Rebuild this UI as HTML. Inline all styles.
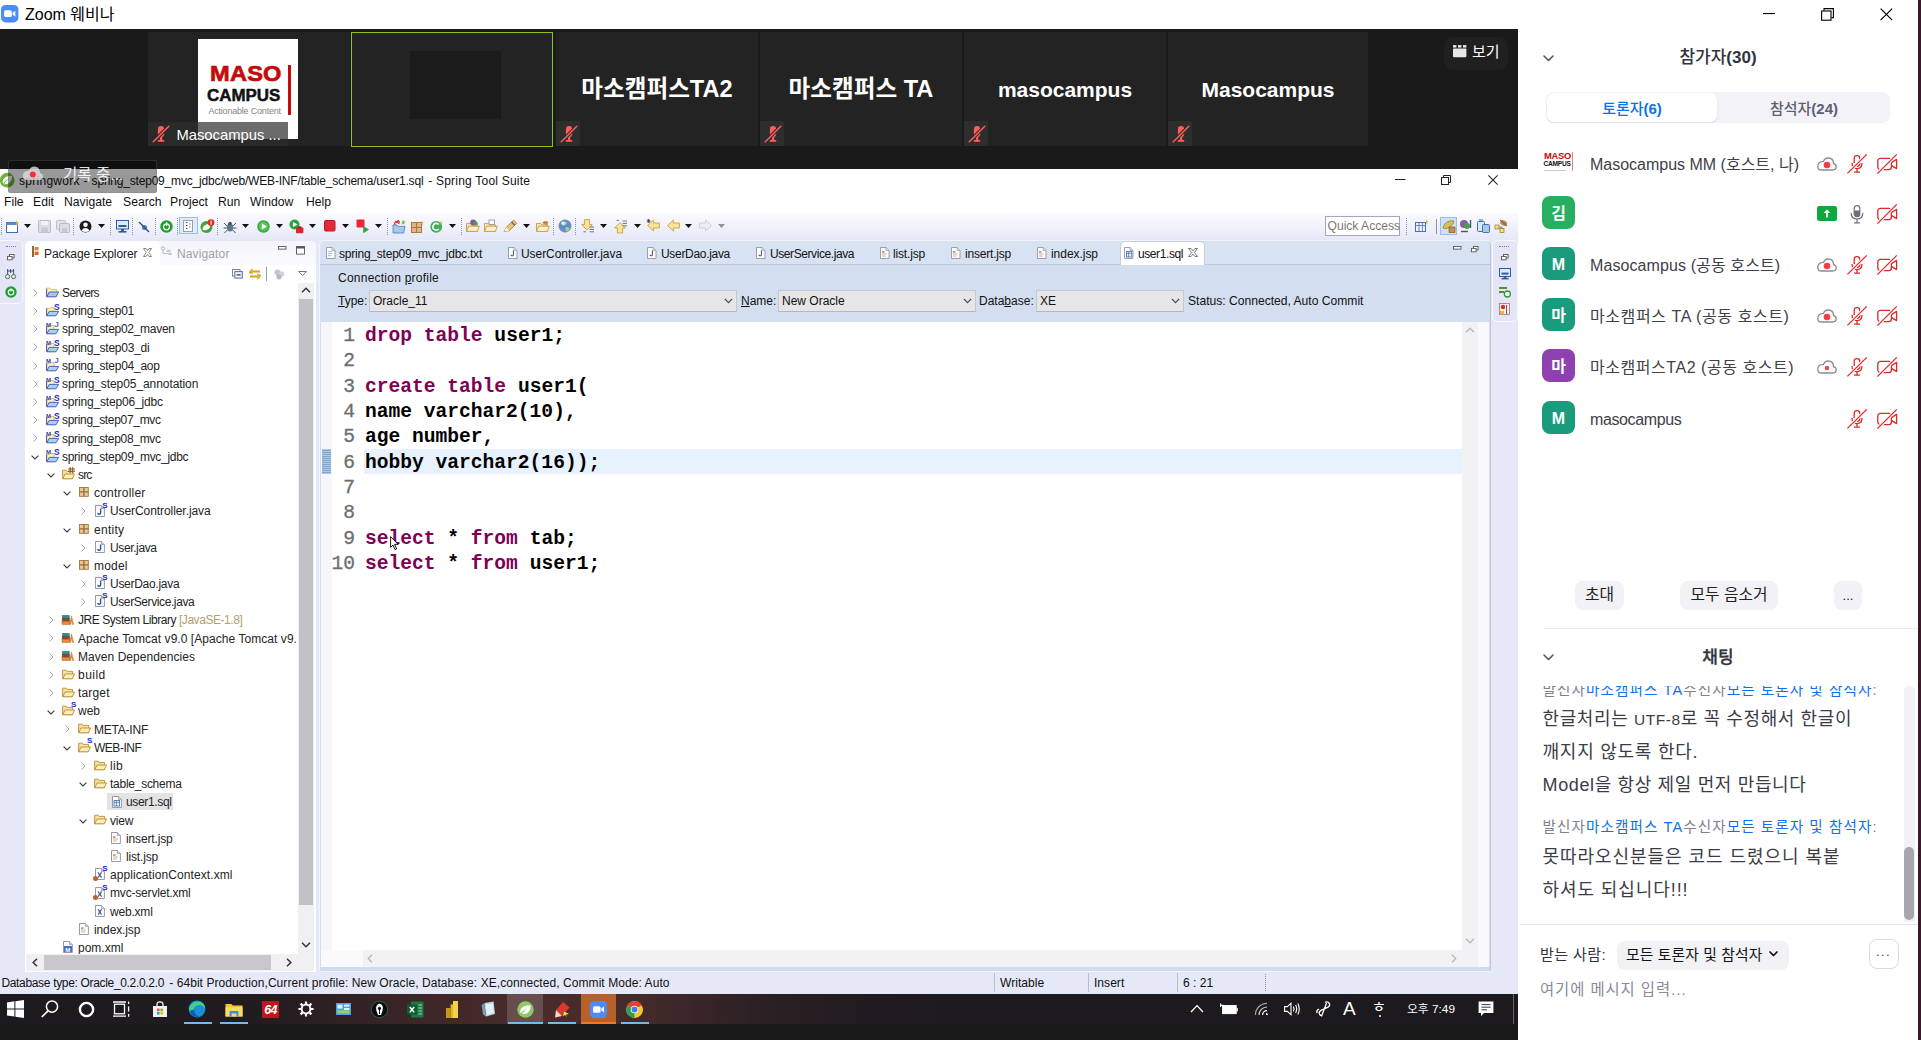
<!DOCTYPE html>
<html lang="ko"><head><meta charset="utf-8"><title>Zoom 웨비나</title>
<style>
*{box-sizing:border-box;margin:0;padding:0}
html,body{width:1921px;height:1040px;overflow:hidden;background:#fff}
body{position:relative;font-family:"Liberation Sans","Noto Sans CJK KR",sans-serif;font-size:12px;color:#000}
.a{position:absolute}
.t{position:absolute;white-space:nowrap;line-height:1}
.kr{font-family:"Liberation Sans","Noto Sans CJK KR",sans-serif}
svg{position:absolute;overflow:visible}
/* zoom */
#zt{left:0;top:0;width:1918px;height:28px;background:#fff}
#dark{left:0;top:29px;width:1518px;height:140px;background:#1a1a1a}
.tile{position:absolute;top:32px;height:114px;background:#232323}
.tname{position:absolute;color:#fff;font-weight:bold;font-size:23.6px;white-space:nowrap;line-height:1;text-align:center;width:100%}
.mute{position:absolute;left:0;top:89px;width:24px;height:25px;background:#2e2e2e}
/* eclipse */
#ecl{left:0;top:169px;width:1518px;height:825px;background:#e5e8f7}
#etitle{left:0;top:169px;width:1518px;height:23px;background:#fff}
#emenu{left:0;top:192px;width:1518px;height:21px;background:#fff}
.mi{position:absolute;top:196.4px;font-size:12.2px;white-space:nowrap;line-height:1;color:#111}
.tr{position:absolute;font-size:12px;white-space:nowrap;line-height:1;color:#242424;letter-spacing:-0.15px}
.code{position:absolute;font-family:"Liberation Mono",monospace;font-weight:bold;font-size:19.6px;white-space:pre;line-height:1;color:#000;left:365px}
.kw{color:#7f0055}
.ln{position:absolute;font-family:"Liberation Mono",monospace;font-size:19.6px;white-space:pre;line-height:1;color:#6e6e6e;-webkit-text-stroke:0.3px #6e6e6e;text-align:right;width:40px;left:315px}
/* right panel */
#rp{left:1518px;top:0;width:400px;height:1040px;background:#fff}
#strip{left:1918px;top:0;width:3px;height:1040px;background:#3a182b}
.pn{position:absolute;left:1590px;font-size:16px;color:#404048;white-space:nowrap;line-height:1}
.av{position:absolute;left:1542px;width:33px;height:33px;border-radius:8px;color:#fff;font-weight:bold;font-size:16px;text-align:center;line-height:35px}
.btn{position:absolute;background:#f1f1f6;border-radius:8px;font-size:15.8px;color:#222;text-align:center;white-space:nowrap}
.ch{position:absolute;left:1542px;white-space:nowrap;line-height:1}
/* taskbar */
#tb{left:0;top:994px;width:1518px;height:30px;background:#1d1a1d}
#tb2{left:0;top:1024px;width:1518px;height:16px;background:#1a1a1a}
</style></head>
<body>
<div class="a" id="zt"></div><div class="a" id="dark"></div><div class="a" id="ecl"></div><div class="a" id="rp"></div><div class="a" id="strip"></div><div class="a" id="tb"></div><div class="a" id="tb2"></div>
<svg style="left:1.2px;top:5.4px" width="17.4" height="17.4" viewBox="0 0 17 17"><rect x="0" y="0" width="17" height="17" rx="4.5" fill="#4a8cff"/><rect x="3" y="5.2" width="7.6" height="6.6" rx="1.6" fill="#fff"/><path d="M11.3 7.6 L14 5.6 V11.4 L11.3 9.4 Z" fill="#fff"/></svg>
<div class="t kr" style="left:25px;top:7px;font-size:16px;color:#000">Zoom 웨비나</div>
<svg style="left:1763px;top:13px" width="13" height="2"><rect width="12" height="1.1" fill="#000"/></svg>
<svg style="left:1821px;top:8px" width="13" height="13" viewBox="0 0 13 13"><path d="M3 2.5 V0.6 H12.4 V9.6 H10.4" fill="none" stroke="#000" stroke-width="1.1"/><rect x="0.6" y="3" width="9.4" height="9.2" fill="none" stroke="#000" stroke-width="1.1"/></svg>
<svg style="left:1880px;top:8px" width="13" height="13" viewBox="0 0 13 13"><path d="M0.6 0.6 L12.2 12.2 M12.2 0.6 L0.6 12.2" stroke="#000" stroke-width="1.2" fill="none"/></svg>
<div class="tile" style="left:148px;width:202px"></div>
<div class="tile" style="left:351px;width:202px;background:#232323;border:1.5px solid #8bc220;height:115px"><div class="a" style="left:58px;top:17.5px;width:91px;height:68px;background:#1b1b1b"></div></div>
<div class="tile" style="left:556px;width:202px"><div class="tname kr" style="top:46px">마소캠퍼스TA2</div><div class="mute"></div></div>
<svg style="left:560px;top:125px" width="18" height="18" viewBox="0 0 18 18"><rect x="5.9" y="1" width="6.3" height="11" rx="3.1" fill="#ff5c5c"/><rect x="7.8" y="12" width="2.4" height="3" fill="#ff5c5c"/><rect x="5.8" y="15" width="6.4" height="1.8" fill="#ff5c5c"/><path d="M1.3 16.7 L16.8 1.3" stroke="#2e2e2e" stroke-width="3.6"/><path d="M1.3 16.7 L16.8 1.3" stroke="#ff5c5c" stroke-width="1.5" stroke-linecap="round"/></svg><div class="tile" style="left:760px;width:202px"><div class="tname kr" style="top:46px">마소캠퍼스 TA</div><div class="mute"></div></div>
<svg style="left:764px;top:125px" width="18" height="18" viewBox="0 0 18 18"><rect x="5.9" y="1" width="6.3" height="11" rx="3.1" fill="#ff5c5c"/><rect x="7.8" y="12" width="2.4" height="3" fill="#ff5c5c"/><rect x="5.8" y="15" width="6.4" height="1.8" fill="#ff5c5c"/><path d="M1.3 16.7 L16.8 1.3" stroke="#2e2e2e" stroke-width="3.6"/><path d="M1.3 16.7 L16.8 1.3" stroke="#ff5c5c" stroke-width="1.5" stroke-linecap="round"/></svg><div class="tile" style="left:964px;width:202px"><div class="tname kr" style="top:46.6px;font-size:21px">masocampus</div><div class="mute"></div></div>
<svg style="left:968px;top:125px" width="18" height="18" viewBox="0 0 18 18"><rect x="5.9" y="1" width="6.3" height="11" rx="3.1" fill="#ff5c5c"/><rect x="7.8" y="12" width="2.4" height="3" fill="#ff5c5c"/><rect x="5.8" y="15" width="6.4" height="1.8" fill="#ff5c5c"/><path d="M1.3 16.7 L16.8 1.3" stroke="#2e2e2e" stroke-width="3.6"/><path d="M1.3 16.7 L16.8 1.3" stroke="#ff5c5c" stroke-width="1.5" stroke-linecap="round"/></svg><div class="tile" style="left:1168px;width:200px"><div class="tname kr" style="top:46.6px;font-size:21px">Masocampus</div><div class="mute"></div></div>
<svg style="left:1172px;top:125px" width="18" height="18" viewBox="0 0 18 18"><rect x="5.9" y="1" width="6.3" height="11" rx="3.1" fill="#ff5c5c"/><rect x="7.8" y="12" width="2.4" height="3" fill="#ff5c5c"/><rect x="5.8" y="15" width="6.4" height="1.8" fill="#ff5c5c"/><path d="M1.3 16.7 L16.8 1.3" stroke="#2e2e2e" stroke-width="3.6"/><path d="M1.3 16.7 L16.8 1.3" stroke="#ff5c5c" stroke-width="1.5" stroke-linecap="round"/></svg><div class="a" style="left:198px;top:39px;width:100px;height:100px;background:#fff"></div>
<div class="t" style="left:209.6px;top:62.6px;font-size:22.6px;font-weight:bold;color:#c40a0a;-webkit-text-stroke:0.7px #c40a0a;letter-spacing:0.2px;transform:scaleX(1.045);transform-origin:0 0">MASO</div>
<div class="t" style="left:207.2px;top:87px;font-size:17.2px;font-weight:bold;color:#111;-webkit-text-stroke:0.5px #111;letter-spacing:0px;transform:scaleX(0.985);transform-origin:0 0">CAMPUS</div>
<div class="t" style="left:208.4px;top:107.2px;font-size:9px;color:#868686;letter-spacing:-0.2px">Actionable Content</div>
<div class="a" style="left:288px;top:65.4px;width:3px;height:50px;background:#c40a0a"></div>
<div class="a" style="left:148px;top:121.5px;width:140px;height:24.5px;background:rgba(45,45,45,0.70)"></div>
<svg style="left:152px;top:125px" width="18" height="18" viewBox="0 0 18 18"><rect x="5.9" y="1" width="6.3" height="11" rx="3.1" fill="#ff5c5c"/><rect x="7.8" y="12" width="2.4" height="3" fill="#ff5c5c"/><rect x="5.8" y="15" width="6.4" height="1.8" fill="#ff5c5c"/><path d="M1.3 16.7 L16.8 1.3" stroke="#2b2b2b" stroke-width="3.6"/><path d="M1.3 16.7 L16.8 1.3" stroke="#ff5c5c" stroke-width="1.5" stroke-linecap="round"/></svg><div class="t" style="left:176.4px;top:128px;font-size:14.8px;color:#fff">Masocampus ...</div>
<div class="a" style="left:1444px;top:37px;width:64px;height:33px;border-radius:9px;background:#202020"></div>
<svg style="left:1453px;top:45.4px" width="13.4" height="12.6" viewBox="0 0 14 13"><rect x="0" y="0" width="3.6" height="2.6" fill="#e8e8e8"/><rect x="5.2" y="0" width="3.6" height="2.6" fill="#e8e8e8"/><rect x="10.4" y="0" width="3.6" height="2.6" fill="#e8e8e8"/><rect x="0" y="3.6" width="14" height="9" rx="0.8" fill="#e8e8e8"/></svg>
<div class="t kr" style="left:1472px;top:43.6px;font-size:15px;color:#fff">보기</div>
<div class="a" id="etitle"></div><div class="a" id="emenu"></div>
<svg style="left:0px;top:171.8px" width="16.4" height="16.4" viewBox="0 0 17 17"><circle cx="7.5" cy="8.5" r="7.6" fill="#6db33f"/><path d="M3.2 12.3 C1.5 8 5 3.6 12.6 3.9 C12.9 9.5 9 13.6 4.2 12.6 C5.6 10.5 7.6 8.4 10.2 6.6 C7 7.7 4.7 9.7 3.2 12.3Z" fill="#fff"/></svg>
<div class="t" style="letter-spacing:0.280px;left:19px;top:175.4px;font-size:12px;color:#111">springwork - </div>
<div class="t" style="letter-spacing:-0.182px;left:91.6px;top:175.4px;font-size:12px;color:#111">spring_step09_mvc_jdbc/web/WEB-INF/table_schema/user1.sql</div>
<div class="t" style="letter-spacing:0.219px;left:428.2px;top:175.4px;font-size:12px;color:#111">- Spring Tool Suite</div>
<svg style="left:1395px;top:179px" width="12" height="2"><rect width="10.5" height="1" fill="#222"/></svg>
<svg style="left:1441px;top:175px" width="10" height="10" viewBox="0 0 10 10"><path d="M2.5 2.5 V0.5 H9.5 V7.5 H7.5" fill="none" stroke="#222" stroke-width="1"/><rect x="0.5" y="2.5" width="7" height="7" fill="none" stroke="#222" stroke-width="1"/></svg>
<svg style="left:1488px;top:175px" width="10" height="10" viewBox="0 0 10 10"><path d="M0.4 0.4 L9.6 9.6 M9.6 0.4 L0.4 9.6" stroke="#222" stroke-width="1.05"/></svg>
<div class="mi" style="left:4px">File</div><div class="mi" style="left:33px">Edit</div><div class="mi" style="left:64px">Navigate</div><div class="mi" style="left:123px">Search</div><div class="mi" style="left:170px">Project</div><div class="mi" style="left:218px">Run</div><div class="mi" style="left:250px">Window</div><div class="mi" style="left:306px">Help</div>
<div class="a" style="left:0;top:213px;width:1518px;height:27px;background:linear-gradient(#fbfbfe,#e5e8f7)"></div>
<div class="a" style="left:1px;top:218px;width:0;height:17px;border-left:1px dotted #9094a8"></div><svg style="left:6px;top:220px" width="13" height="13" viewBox="0 0 13 13"><rect x="0.5" y="2.5" width="11" height="10" fill="#fff" stroke="#3f6fb0"/><rect x="0.5" y="2.5" width="11" height="2.5" fill="#5a8ed0"/><path d="M10 0 L11 2 L13 2.4 L11.3 3.6 L11.8 5.6 L10 4.4 Z" fill="#e8b330"/></svg><svg style="left:23.5px;top:224px" width="7" height="4" viewBox="0 0 7 4"><path d="M0 0 H7 L3.5 4Z" fill="#111"/></svg><svg style="left:38px;top:220px" width="13" height="13" viewBox="0 0 13 13"><rect x="0.5" y="0.5" width="12" height="12" rx="1" fill="#dcdde6" stroke="#b8bac8"/><rect x="3" y="1" width="7" height="4" fill="#f2f2f6"/><rect x="3" y="7.5" width="7" height="5" fill="#c6c8d4"/></svg><svg style="left:56px;top:220px" width="14" height="13" viewBox="0 0 14 13"><rect x="0.5" y="0.5" width="9" height="9" rx="1" fill="#e2e3ea" stroke="#bdbfcc"/><rect x="3.5" y="3.5" width="10" height="9" rx="1" fill="#dcdde6" stroke="#b8bac8"/><rect x="6" y="8" width="5" height="4.5" fill="#c6c8d4"/></svg><div class="a" style="left:73px;top:218px;width:0;height:17px;border-left:1px dotted #9094a8"></div><svg style="left:79px;top:220px" width="13" height="13" viewBox="0 0 13 13"><circle cx="6.5" cy="6.5" r="6" fill="#1c1c1c"/><circle cx="6.5" cy="4.8" r="2.3" fill="#fff"/><path d="M2.4 10.4 Q6.5 5.6 10.6 10.4 Q6.5 13.4 2.4 10.4Z" fill="#fff"/></svg><svg style="left:97.5px;top:224px" width="7" height="4" viewBox="0 0 7 4"><path d="M0 0 H7 L3.5 4Z" fill="#111"/></svg><div class="a" style="left:110px;top:218px;width:0;height:17px;border-left:1px dotted #9094a8"></div><svg style="left:116px;top:220px" width="13" height="13" viewBox="0 0 13 13"><rect x="0.5" y="0.5" width="12" height="8.5" fill="#dbe8f8" stroke="#2f5d9e"/><rect x="2.5" y="5" width="8" height="2" fill="#2f5d9e"/><rect x="5" y="9" width="3" height="2" fill="#2f5d9e"/><rect x="2.5" y="11" width="8" height="1.6" fill="#2f5d9e"/></svg><div class="a" style="left:132px;top:218px;width:0;height:17px;border-left:1px dotted #9094a8"></div><svg style="left:138px;top:221px" width="12" height="12" viewBox="0 0 12 12"><circle cx="6.5" cy="6.5" r="2.6" fill="#5b86c2"/><path d="M1 1 L11 11" stroke="#2c4f86" stroke-width="1.4"/></svg><div class="a" style="left:155px;top:218px;width:0;height:17px;border-left:1px dotted #9094a8"></div><svg style="left:160px;top:220px" width="13" height="13" viewBox="0 0 13 13"><circle cx="6.5" cy="6.5" r="6.2" fill="#1e9e2c"/><circle cx="6.5" cy="6.8" r="3" fill="none" stroke="#fff" stroke-width="1.3"/><rect x="5.9" y="2.3" width="1.3" height="3.6" fill="#fff"/></svg><div class="a" style="left:177px;top:218px;width:0;height:17px;border-left:1px dotted #9094a8"></div><div class="a" style="left:179px;top:217px;width:19px;height:17px;background:#dfeafb;border:1px solid #9cbcec"></div><svg style="left:183px;top:220px" width="11" height="12" viewBox="0 0 11 12"><rect x="0.5" y="0.5" width="9" height="11" fill="#fff" stroke="#9aa0b4"/><path d="M3 2.5 H4.4 M3 5.5 H4.4 M3 8.5 H4.4 M6.3 4 H7.4 M6.3 7 H7.4" stroke="#444" stroke-width="1.1"/></svg><svg style="left:200px;top:219px" width="15" height="15" viewBox="0 0 15 15"><circle cx="6.5" cy="8" r="6" fill="#3fa535"/><path d="M2.6 10.6 C2.5 7 6 4.6 10.6 5.2 C10.4 9.6 7 12 3.4 11 Z" fill="#fff"/><circle cx="11" cy="3.6" r="3.4" fill="#e02a1e"/><rect x="10.5" y="1.6" width="1.1" height="4" fill="#fff"/></svg><div class="a" style="left:217px;top:218px;width:0;height:17px;border-left:1px dotted #9094a8"></div><svg style="left:223px;top:220px" width="14" height="14" viewBox="0 0 14 14"><ellipse cx="7" cy="7.6" rx="3.2" ry="4" fill="#5d7a8c"/><circle cx="7" cy="3.6" r="1.8" fill="#3e5565"/><path d="M1 3 L4 6 M13 3 L10 6 M0.6 8 H3.8 M13.4 8 H10.2 M1.4 13 L4.2 10.2 M12.6 13 L9.8 10.2" stroke="#3e5565" stroke-width="1"/></svg><svg style="left:241.5px;top:224px" width="7" height="4" viewBox="0 0 7 4"><path d="M0 0 H7 L3.5 4Z" fill="#111"/></svg><svg style="left:257px;top:220px" width="13" height="13" viewBox="0 0 13 13"><circle cx="6.5" cy="6.5" r="6.2" fill="#2ea33a"/><circle cx="6.5" cy="6.5" r="5" fill="#57c255"/><path d="M4.8 3.4 L9.8 6.5 L4.8 9.6Z" fill="#fff"/></svg><svg style="left:275.5px;top:224px" width="7" height="4" viewBox="0 0 7 4"><path d="M0 0 H7 L3.5 4Z" fill="#111"/></svg><svg style="left:289px;top:219px" width="15" height="15" viewBox="0 0 15 15"><circle cx="5.5" cy="5.5" r="5" fill="#2ea33a"/><path d="M4 3 L8.4 5.5 L4 8Z" fill="#fff"/><rect x="7" y="8.6" width="7.4" height="5.6" rx="0.8" fill="#d8262c"/><rect x="9" y="7.4" width="3.4" height="1.6" fill="#8e1a1e"/></svg><svg style="left:308.5px;top:224px" width="7" height="4" viewBox="0 0 7 4"><path d="M0 0 H7 L3.5 4Z" fill="#111"/></svg><svg style="left:324px;top:220px" width="12" height="12" viewBox="0 0 12 12"><rect x="0.5" y="0.5" width="10.5" height="10.5" rx="1.2" fill="#e8283a" stroke="#b5142a"/></svg><svg style="left:341.5px;top:224px" width="7" height="4" viewBox="0 0 7 4"><path d="M0 0 H7 L3.5 4Z" fill="#111"/></svg><svg style="left:356px;top:219px" width="14" height="15" viewBox="0 0 14 15"><rect x="0.5" y="0.5" width="8" height="8" rx="1" fill="#e8283a"/><path d="M7.2 7 L13 10.6 L7.2 14.2Z" fill="#2ea33a"/></svg><svg style="left:374.5px;top:224px" width="7" height="4" viewBox="0 0 7 4"><path d="M0 0 H7 L3.5 4Z" fill="#111"/></svg><div class="a" style="left:387px;top:218px;width:0;height:17px;border-left:1px dotted #9094a8"></div><svg style="left:392px;top:219px" width="14" height="15" viewBox="0 0 14 15"><path d="M1 6 H5 L6 7.4 H13 L11.6 14 H1Z" fill="#a6c8ee" stroke="#4b7ab8" stroke-width="0.8"/><path d="M3 6 C2 3 4.6 1 5 4 C5.8 0 8 1.6 6.6 5" fill="none" stroke="#d8262c" stroke-width="1.3"/><path d="M11 0.4 L11.8 2.4 L13.8 2.6 L12.2 3.8 L12.8 5.8 L11 4.6 L9.4 5.8 L9.9 3.8Z" fill="#6bbf3a"/></svg><svg style="left:411px;top:220px" width="13" height="13" viewBox="0 0 13 13"><rect x="0.5" y="2.5" width="10" height="10" fill="#e0b684" stroke="#a87840"/><path d="M5.5 2.5 V12.5 M0.5 7.5 H10.5" stroke="#a87840" stroke-width="1.1"/><path d="M10.4 0 L11.2 2 L13 2.2 L11.6 3.4 L12.2 5.2 L10.4 4.2Z" fill="#e8b330"/></svg><svg style="left:430px;top:220px" width="13" height="13" viewBox="0 0 13 13"><circle cx="6.2" cy="6.8" r="5.9" fill="#3fae56"/><path d="M8.8 4.6 A3.4 3.4 0 1 0 8.8 9" fill="none" stroke="#fff" stroke-width="1.6"/><path d="M10.6 0 L11.3 1.8 L13 2 L11.7 3.1 L12.2 4.8 L10.6 3.9Z" fill="#e8b330"/></svg><svg style="left:448.5px;top:224px" width="7" height="4" viewBox="0 0 7 4"><path d="M0 0 H7 L3.5 4Z" fill="#111"/></svg><div class="a" style="left:461px;top:218px;width:0;height:17px;border-left:1px dotted #9094a8"></div><svg style="left:466px;top:219px" width="14" height="14" viewBox="0 0 14 14"><path d="M0.5 4.4 H4.6 L5.8 5.8 H11.4 V12.4 H0.5Z" fill="#f8e6ae" stroke="#c49c42" stroke-width="0.9"/><path d="M0.5 12.4 L2.6 7.2 H13.4 L11.4 12.4Z" fill="#fdf1c8" stroke="#c49c42" stroke-width="0.9"/><circle cx="7.2" cy="3.4" r="3" fill="#7d5ea0"/><circle cx="9.6" cy="4.4" r="2.1" fill="#4f9a4f"/></svg><svg style="left:484px;top:219px" width="14" height="14" viewBox="0 0 14 14"><path d="M0.5 4.4 H4.6 L5.8 5.8 H11.4 V12.4 H0.5Z" fill="#f8e6ae" stroke="#c49c42" stroke-width="0.9"/><path d="M0.5 12.4 L2.6 7.2 H13.4 L11.4 12.4Z" fill="#fdf1c8" stroke="#c49c42" stroke-width="0.9"/><rect x="5" y="1" width="5.4" height="4.4" fill="#fff" stroke="#8a8fa8" stroke-width="0.8"/></svg><svg style="left:503px;top:219px" width="15" height="14" viewBox="0 0 15 14"><path d="M1 12.6 L3.2 8.4 L10.6 1 L13.8 4.2 L6.4 11.6Z" fill="#e9c27a" stroke="#a97a32" stroke-width="0.8"/><path d="M3.2 8.4 L6.4 11.6 L1 12.6Z" fill="#f8f4ea"/><path d="M8.6 3 L11.8 6.2" stroke="#7a6a52" stroke-width="1.6"/></svg><svg style="left:522.5px;top:224px" width="7" height="4" viewBox="0 0 7 4"><path d="M0 0 H7 L3.5 4Z" fill="#111"/></svg><svg style="left:536px;top:219px" width="14" height="14" viewBox="0 0 14 14"><path d="M0.5 4.4 H4.6 L5.8 5.8 H11.4 V12.4 H0.5Z" fill="#f8e6ae" stroke="#c49c42" stroke-width="0.9"/><path d="M0.5 12.4 L2.6 7.2 H13.4 L11.4 12.4Z" fill="#fdf1c8" stroke="#c49c42" stroke-width="0.9"/><path d="M6 4 Q9 0.6 12.4 3.2 L11 6.4 Z" fill="#c9873a"/></svg><div class="a" style="left:553px;top:218px;width:0;height:17px;border-left:1px dotted #9094a8"></div><svg style="left:558px;top:219px" width="14" height="14" viewBox="0 0 14 14"><circle cx="7" cy="7" r="6.2" fill="#5f8ccf" stroke="#8a93b0" stroke-width="0.6"/><path d="M3 4 Q6 1.4 9 3.4 Q8 6.6 5 6.6 Q3.2 6 3 4Z M7.4 8.4 Q10.6 7.4 11.6 10 Q9.6 12.6 7.6 11.6Z" fill="#a4d890"/><circle cx="5" cy="4.2" r="1.6" fill="#eef4ff" opacity=".85"/></svg><div class="a" style="left:575px;top:218px;width:0;height:17px;border-left:1px dotted #9094a8"></div><svg style="left:581px;top:219px" width="14" height="15" viewBox="0 0 14 15"><path d="M3.4 0.6 H8.6 V5.6 H11.4 L6 11 L0.6 5.6 H3.4Z" fill="#fbe39c" stroke="#c59632" stroke-width="0.8"/><path d="M8.6 8 H13 M8.6 10.4 H13 M8.6 12.8 H13 M2.4 12.8 H5" stroke="#6d7390" stroke-width="1"/></svg><svg style="left:599.5px;top:224px" width="7" height="4" viewBox="0 0 7 4"><path d="M0 0 H7 L3.5 4Z" fill="#111"/></svg><svg style="left:614px;top:219px" width="14" height="15" viewBox="0 0 14 15"><path d="M3.4 14 H8.6 V9 H11.4 L6 3.6 L0.6 9 H3.4Z" fill="#fbe39c" stroke="#c59632" stroke-width="0.8"/><path d="M8.6 2 H13 M8.6 4.4 H13 M8.6 6.8 H13 M2.6 1.4 H5" stroke="#6d7390" stroke-width="1"/></svg><svg style="left:633.5px;top:224px" width="7" height="4" viewBox="0 0 7 4"><path d="M0 0 H7 L3.5 4Z" fill="#111"/></svg><svg style="left:647px;top:219px" width="14" height="14" viewBox="0 0 14 14"><path d="M0.6 6.5 L6.4 1 V4 H12.4 V9 H6.4 V12Z" fill="#fbe39c" stroke="#c59632" stroke-width="0.8"/><path d="M1.6 0 V4 M-0.4 2 H3.6 M0.2 0.6 L3 3.4 M3 0.6 L0.2 3.4" stroke="#333" stroke-width="0.8"/></svg><svg style="left:667px;top:219px" width="14" height="14" viewBox="0 0 14 14"><path d="M0.6 6.5 L6.4 1 V4 H12.4 V9 H6.4 V12Z" fill="#fbe39c" stroke="#c59632" stroke-width="0.8"/></svg><svg style="left:684.5px;top:224px" width="7" height="4" viewBox="0 0 7 4"><path d="M0 0 H7 L3.5 4Z" fill="#111"/></svg><svg style="left:699px;top:219px" width="14" height="14" viewBox="0 0 14 14"><g transform="translate(13,0) scale(-1,1)"><path d="M0.6 6.5 L6.4 1 V4 H12.4 V9 H6.4 V12Z" fill="#eeeef4" stroke="#c3c5d2" stroke-width="0.8"/></g></svg><svg style="left:717.5px;top:224px" width="7" height="4" viewBox="0 0 7 4"><path d="M0 0 H7 L3.5 4Z" fill="#8d8f9c"/></svg><div class="a" style="left:1325px;top:216px;width:75px;height:20px;background:#fff;border:1px solid #a4a7b6"></div><div class="t" style="left:1327.5px;top:220.4px;font-size:12.1px;color:#787878">Quick Access</div><div class="a" style="left:1406px;top:218px;width:0;height:17px;border-left:1px dotted #9094a8"></div><svg style="left:1415px;top:219px" width="14" height="14" viewBox="0 0 14 14"><rect x="0.5" y="3.5" width="10" height="9" fill="#eef3fb" stroke="#4a72b0"/><path d="M0.5 6.5 H10.5 M4 3.5 V12.5 M7.4 3.5 V12.5" stroke="#4a72b0" stroke-width="0.8"/><path d="M11 0 L11.8 2 L13.6 2.2 L12.2 3.4 L12.8 5.4 L11 4.2Z" fill="#e8b330"/></svg><div class="a" style="left:1436px;top:219px;width:1px;height:15px;background:#8e92a6"></div><div class="a" style="left:1440px;top:217px;width:17px;height:18px;background:#cfe0f8;border:1px solid #9cbcec"></div><svg style="left:1442px;top:219px" width="14" height="14" viewBox="0 0 14 14"><path d="M1 9 C2 3 8 1 12 2 C11 6 8 9 3 9.6Z" fill="#d6c24a" stroke="#8c7a1a" stroke-width="0.7"/><rect x="7" y="8" width="6" height="5.6" fill="#c98d4c" stroke="#8a5a22" stroke-width="0.7"/></svg><svg style="left:1459px;top:219px" width="14" height="14" viewBox="0 0 14 14"><circle cx="5" cy="5" r="4" fill="#7d5ea0"/><circle cx="8" cy="7" r="3" fill="#4f9a4f"/><path d="M2 12.5 H9" stroke="#555" stroke-width="1.4"/><path d="M11.5 1 V9" stroke="#3e5a8c" stroke-width="1.4"/></svg><svg style="left:1477px;top:219px" width="14" height="14" viewBox="0 0 14 14"><rect x="0.5" y="2.5" width="7" height="10" rx="1" fill="#dbe8f8" stroke="#3f6fb0"/><rect x="5.5" y="5.5" width="7" height="8" rx="1" fill="#a8c6ee" stroke="#3f6fb0"/><path d="M2 1 H6" stroke="#3f6fb0"/></svg><svg style="left:1494px;top:219px" width="15" height="14" viewBox="0 0 15 14"><rect x="1" y="6" width="4" height="4" fill="#f3e08a" stroke="#8a7a2a" stroke-width="0.7"/><rect x="6" y="9.4" width="4" height="4" fill="#f3e08a" stroke="#8a7a2a" stroke-width="0.7"/><path d="M5 8 H8 V9.4" stroke="#555" fill="none" stroke-width="0.8"/><ellipse cx="9.6" cy="4" rx="3.6" ry="2.6" fill="#b98a4a" transform="rotate(30 9.6 4)"/><path d="M6 1 L13 7" stroke="#6a4a1a" stroke-width="0.9"/></svg>
<div class="a" style="left:-4px;top:240px;width:27px;height:64px;background:#e4e6f8;border:1.5px solid #f8f8fe;border-radius:5px"></div>
<div class="a" style="left:6px;top:246px;width:10px;height:0;border-top:1px dotted #7a7e92"></div>
<svg style="left:7px;top:254px" width="8" height="7" viewBox="0 0 8 7"><rect x="2.5" y="0.5" width="4.6" height="3.4" fill="#fff" stroke="#555" stroke-width="0.9"/><rect x="0.5" y="2.4" width="4.6" height="3.4" fill="#fff" stroke="#555" stroke-width="0.9"/></svg>
<svg style="left:5px;top:268px" width="12" height="12" viewBox="0 0 12 12"><circle cx="2.6" cy="8.6" r="2.1" fill="none" stroke="#4f7d3a" stroke-width="1"/><circle cx="8.6" cy="8.6" r="2.1" fill="none" stroke="#4f7d3a" stroke-width="1"/><path d="M2.6 6.5 V1 M8.6 6.5 V1 M2.6 3 H8.6 M5.6 1 V5" stroke="#3d4f8a" stroke-width="1"/></svg>
<svg style="left:5px;top:286px" width="12" height="12" viewBox="0 0 12 12"><circle cx="6" cy="6" r="5.7" fill="#1e9e2c"/><circle cx="6" cy="6.3" r="2.7" fill="none" stroke="#fff" stroke-width="1.2"/><rect x="5.4" y="2.2" width="1.2" height="3.2" fill="#fff"/></svg>
<div class="a" style="left:25px;top:241px;width:291px;height:731px;background:#fff;border-radius:5px 5px 0 0"></div>
<div class="a" style="left:25px;top:241px;width:291px;height:24px;background:linear-gradient(#f4f5fc,#fbfbff);border-radius:5px 5px 0 0"></div>
<div class="a" style="left:25px;top:241px;width:135px;height:24px;background:#fff;border-radius:5px 5px 0 0"></div>
<svg style="left:32px;top:246px" width="7" height="11" viewBox="0 0 7 11"><rect x="0" y="0" width="2" height="11" fill="#8c6a3c"/><rect x="2.6" y="1" width="4" height="3.4" fill="#c98d4c"/><rect x="2.6" y="5.6" width="4" height="3.4" fill="#d46a2a"/></svg>
<div class="t" style="letter-spacing:-0.082px;left:44px;top:248px;font-size:12px;color:#1c1c1c">Package Explorer</div>
<svg style="left:143px;top:248px" width="9" height="9" viewBox="0 0 9 9"><path d="M0.5 0.5 L3 0.5 L4.5 2.6 L6 0.5 H8.5 L5.8 4.5 L8.5 8.5 H6 L4.5 6.4 L3 8.5 H0.5 L3.2 4.5Z" fill="none" stroke="#777" stroke-width="0.9"/></svg>
<svg style="left:161px;top:246px" width="12" height="11" viewBox="0 0 12 11"><circle cx="2" cy="2.4" r="1.6" fill="none" stroke="#a9adbf" stroke-width="0.9"/><path d="M2 4 V7.6 H5 M5 5 H7 M5 7.6 h3" stroke="#a9adbf" stroke-width="0.9" fill="none"/><rect x="6.6" y="3.8" width="3" height="2.2" fill="#c3c6d4"/><rect x="7.6" y="6.8" width="3" height="2.2" fill="#c3c6d4"/></svg>
<div class="t" style="letter-spacing:0.127px;left:177px;top:248px;font-size:12px;color:#a0a0a6">Navigator</div>
<svg style="left:278px;top:246px" width="9" height="4" viewBox="0 0 9 4"><rect x="0.5" y="0.5" width="7.5" height="2.6" fill="#fff" stroke="#555" stroke-width="0.9"/></svg>
<svg style="left:296px;top:246px" width="9" height="9" viewBox="0 0 9 9"><rect x="0.5" y="0.5" width="8" height="7.6" fill="#fff" stroke="#555" stroke-width="0.9"/><rect x="0.5" y="0.5" width="8" height="2" fill="#555"/></svg>
<svg style="left:232px;top:269px" width="11" height="10" viewBox="0 0 11 10"><rect x="0.5" y="0.5" width="7.5" height="6.5" fill="#fff" stroke="#7b84a6"/><rect x="2.8" y="2.6" width="7.5" height="6.5" fill="#eef2fb" stroke="#5b6aa0"/><path d="M4.6 5.9 H8.6" stroke="#222" stroke-width="1.1"/></svg>
<svg style="left:249px;top:268px" width="12" height="12" viewBox="0 0 12 12"><path d="M11 3.5 H3.6 Q1 3.5 1 5.6" fill="none" stroke="#d9a11c" stroke-width="1.8"/><path d="M3.6 0.6 L0.6 3.5 L3.6 6.4" fill="#e9b82c" stroke="#b5830e" stroke-width="0.6"/><path d="M1 8.5 H8.4 Q11 8.5 11 6.4" fill="none" stroke="#d9a11c" stroke-width="1.8"/><path d="M8.4 5.6 L11.4 8.5 L8.4 11.4" fill="#e9b82c" stroke="#b5830e" stroke-width="0.6"/></svg>
<div class="a" style="left:266px;top:267px;width:1px;height:14px;background:#9a9eb0"></div>
<svg style="left:274px;top:269px" width="12" height="11" viewBox="0 0 12 11"><circle cx="3.4" cy="3.4" r="2.8" fill="#c2c4cf"/><circle cx="7.6" cy="5" r="2.8" fill="#d2d4dc"/><circle cx="5" cy="7.8" r="2.6" fill="#b6b8c6"/></svg>
<svg style="left:298px;top:271px" width="9" height="5" viewBox="0 0 9 5"><path d="M0.6 0.5 H8.4 L4.5 4.4Z" fill="#fff" stroke="#666" stroke-width="0.9"/></svg>
<div class="a" style="left:298px;top:283px;width:16px;height:671px;background:#f0f0f3"></div>
<div class="a" style="left:299px;top:299px;width:14px;height:606px;background:#c2c2c6"></div>
<svg style="left:301px;top:287px" width="10" height="6" viewBox="0 0 10 6"><path d="M1 5.2 L5 1.2 L9 5.2" fill="none" stroke="#333" stroke-width="1.5"/></svg>
<svg style="left:301px;top:942px" width="10" height="6" viewBox="0 0 10 6"><path d="M1 0.8 L5 4.8 L9 0.8" fill="none" stroke="#333" stroke-width="1.5"/></svg>
<div class="a" style="left:26px;top:954px;width:288px;height:17px;background:#f0f0f3"></div>
<div class="a" style="left:44px;top:955px;width:227px;height:15px;background:#c8c8cc"></div>
<svg style="left:32px;top:958px" width="6" height="9" viewBox="0 0 6 9"><path d="M5 0.8 L1.2 4.5 L5 8.2" fill="none" stroke="#333" stroke-width="1.5"/></svg>
<svg style="left:286px;top:958px" width="6" height="9" viewBox="0 0 6 9"><path d="M1 0.8 L4.8 4.5 L1 8.2" fill="none" stroke="#333" stroke-width="1.5"/></svg>
<div class="a" style="left:26px;top:283px;width:272px;height:671px;overflow:hidden"><svg style="left:7.4px;top:5.8px" width="5" height="8" viewBox="0 0 5 8"><path d="M0.6 0.6 L4 4 L0.6 7.4" fill="none" stroke="#a4a4a4" stroke-width="1"/></svg><svg style="left:19.5px;top:3.8000000000000003px" width="13" height="11" viewBox="0 0 13 11"><path d="M0.6 1.2 H4.2 L5.2 2.4 H10.6 V9.6 H0.6Z" fill="#fbf3b4" stroke="#c9b260" stroke-width="0.8"/><path d="M0.6 2 V9.6" stroke="#3a46b0" stroke-width="0.9"/><path d="M0.8 9.8 L3.2 5 H12.6 L10 9.8Z" fill="#a9c6f2" stroke="#3a56b8" stroke-width="0.9"/></svg><div class="tr" style="letter-spacing:-0.621px;left:36px;top:4.0px">Servers</div><svg style="left:7.4px;top:24.0px" width="5" height="8" viewBox="0 0 5 8"><path d="M0.6 0.6 L4 4 L0.6 7.4" fill="none" stroke="#a4a4a4" stroke-width="1"/></svg><svg style="left:19.5px;top:23.0px" width="13" height="11" viewBox="0 0 13 11"><path d="M0.6 2.6 H3.6 L4.4 1.6 H8 V9.6 H0.6Z" fill="#fbf3b4" stroke="#c9b260" stroke-width="0.8"/><path d="M0.6 2.4 V9.6" stroke="#3a46b0" stroke-width="0.9"/><path d="M0.8 9.8 L3.2 5.4 H12.6 L10 9.8Z" fill="#a9d0f4" stroke="#3a56b8" stroke-width="0.9"/></svg><div class="t" style="left:28px;top:19.799999999999997px;font-size:8.4px;font-weight:bold;color:#1f1fd0">S</div><div class="tr" style="letter-spacing:-0.261px;left:36px;top:22.2px">spring_step01</div><svg style="left:7.4px;top:42.2px" width="5" height="8" viewBox="0 0 5 8"><path d="M0.6 0.6 L4 4 L0.6 7.4" fill="none" stroke="#a4a4a4" stroke-width="1"/></svg><svg style="left:19.5px;top:41.2px" width="13" height="11" viewBox="0 0 13 11"><path d="M0.6 2.6 H3.6 L4.4 1.6 H8 V9.6 H0.6Z" fill="#fbf3b4" stroke="#c9b260" stroke-width="0.8"/><path d="M0.6 2.4 V9.6" stroke="#3a46b0" stroke-width="0.9"/><path d="M0.8 9.8 L3.2 5.4 H12.6 L10 9.8Z" fill="#a9d0f4" stroke="#3a56b8" stroke-width="0.9"/></svg><div class="t" style="left:20px;top:39.0px;font-size:6px;font-weight:bold;color:#2a3ab0">M</div><div class="t" style="left:28.4px;top:38.0px;font-size:7.6px;font-weight:bold;color:#4a5ab8">J</div><div class="tr" style="letter-spacing:-0.283px;left:36px;top:40.4px">spring_step02_maven</div><svg style="left:7.4px;top:60.4px" width="5" height="8" viewBox="0 0 5 8"><path d="M0.6 0.6 L4 4 L0.6 7.4" fill="none" stroke="#a4a4a4" stroke-width="1"/></svg><svg style="left:19.5px;top:59.4px" width="13" height="11" viewBox="0 0 13 11"><path d="M0.6 2.6 H3.6 L4.4 1.6 H8 V9.6 H0.6Z" fill="#fbf3b4" stroke="#c9b260" stroke-width="0.8"/><path d="M0.6 2.4 V9.6" stroke="#3a46b0" stroke-width="0.9"/><path d="M0.8 9.8 L3.2 5.4 H12.6 L10 9.8Z" fill="#a9d0f4" stroke="#3a56b8" stroke-width="0.9"/></svg><div class="t" style="left:20px;top:57.199999999999996px;font-size:6px;font-weight:bold;color:#2a3ab0">M</div><div class="t" style="left:28px;top:56.199999999999996px;font-size:8.4px;font-weight:bold;color:#1f1fd0">S</div><div class="tr" style="letter-spacing:-0.257px;left:36px;top:58.6px">spring_step03_di</div><svg style="left:7.4px;top:78.6px" width="5" height="8" viewBox="0 0 5 8"><path d="M0.6 0.6 L4 4 L0.6 7.4" fill="none" stroke="#a4a4a4" stroke-width="1"/></svg><svg style="left:19.5px;top:77.6px" width="13" height="11" viewBox="0 0 13 11"><path d="M0.6 2.6 H3.6 L4.4 1.6 H8 V9.6 H0.6Z" fill="#fbf3b4" stroke="#c9b260" stroke-width="0.8"/><path d="M0.6 2.4 V9.6" stroke="#3a46b0" stroke-width="0.9"/><path d="M0.8 9.8 L3.2 5.4 H12.6 L10 9.8Z" fill="#a9d0f4" stroke="#3a56b8" stroke-width="0.9"/></svg><div class="t" style="left:20px;top:75.4px;font-size:6px;font-weight:bold;color:#2a3ab0">M</div><div class="t" style="left:28.4px;top:74.4px;font-size:7.6px;font-weight:bold;color:#4a5ab8">J</div><div class="tr" style="letter-spacing:-0.259px;left:36px;top:76.8px">spring_step04_aop</div><svg style="left:7.4px;top:96.8px" width="5" height="8" viewBox="0 0 5 8"><path d="M0.6 0.6 L4 4 L0.6 7.4" fill="none" stroke="#a4a4a4" stroke-width="1"/></svg><svg style="left:19.5px;top:95.69999999999999px" width="13" height="11" viewBox="0 0 13 11"><path d="M0.6 2.6 H3.6 L4.4 1.6 H8 V9.6 H0.6Z" fill="#fbf3b4" stroke="#c9b260" stroke-width="0.8"/><path d="M0.6 2.4 V9.6" stroke="#3a46b0" stroke-width="0.9"/><path d="M0.8 9.8 L3.2 5.4 H12.6 L10 9.8Z" fill="#a9d0f4" stroke="#3a56b8" stroke-width="0.9"/></svg><div class="t" style="left:20px;top:93.5px;font-size:6px;font-weight:bold;color:#2a3ab0">M</div><div class="t" style="left:28px;top:92.5px;font-size:8.4px;font-weight:bold;color:#1f1fd0">S</div><div class="tr" style="letter-spacing:-0.076px;left:36px;top:94.9px">spring_step05_annotation</div><svg style="left:7.4px;top:114.9px" width="5" height="8" viewBox="0 0 5 8"><path d="M0.6 0.6 L4 4 L0.6 7.4" fill="none" stroke="#a4a4a4" stroke-width="1"/></svg><svg style="left:19.5px;top:113.89999999999999px" width="13" height="11" viewBox="0 0 13 11"><path d="M0.6 2.6 H3.6 L4.4 1.6 H8 V9.6 H0.6Z" fill="#fbf3b4" stroke="#c9b260" stroke-width="0.8"/><path d="M0.6 2.4 V9.6" stroke="#3a46b0" stroke-width="0.9"/><path d="M0.8 9.8 L3.2 5.4 H12.6 L10 9.8Z" fill="#a9d0f4" stroke="#3a56b8" stroke-width="0.9"/></svg><div class="t" style="left:20px;top:111.7px;font-size:6px;font-weight:bold;color:#2a3ab0">M</div><div class="t" style="left:28px;top:110.7px;font-size:8.4px;font-weight:bold;color:#1f1fd0">S</div><div class="tr" style="letter-spacing:-0.187px;left:36px;top:113.1px">spring_step06_jdbc</div><svg style="left:7.4px;top:133.1px" width="5" height="8" viewBox="0 0 5 8"><path d="M0.6 0.6 L4 4 L0.6 7.4" fill="none" stroke="#a4a4a4" stroke-width="1"/></svg><svg style="left:19.5px;top:132.1px" width="13" height="11" viewBox="0 0 13 11"><path d="M0.6 2.6 H3.6 L4.4 1.6 H8 V9.6 H0.6Z" fill="#fbf3b4" stroke="#c9b260" stroke-width="0.8"/><path d="M0.6 2.4 V9.6" stroke="#3a46b0" stroke-width="0.9"/><path d="M0.8 9.8 L3.2 5.4 H12.6 L10 9.8Z" fill="#a9d0f4" stroke="#3a56b8" stroke-width="0.9"/></svg><div class="t" style="left:20px;top:129.9px;font-size:6px;font-weight:bold;color:#2a3ab0">M</div><div class="t" style="left:28px;top:128.9px;font-size:8.4px;font-weight:bold;color:#1f1fd0">S</div><div class="tr" style="letter-spacing:-0.316px;left:36px;top:131.3px">spring_step07_mvc</div><svg style="left:7.4px;top:151.3px" width="5" height="8" viewBox="0 0 5 8"><path d="M0.6 0.6 L4 4 L0.6 7.4" fill="none" stroke="#a4a4a4" stroke-width="1"/></svg><svg style="left:19.5px;top:150.29999999999998px" width="13" height="11" viewBox="0 0 13 11"><path d="M0.6 2.6 H3.6 L4.4 1.6 H8 V9.6 H0.6Z" fill="#fbf3b4" stroke="#c9b260" stroke-width="0.8"/><path d="M0.6 2.4 V9.6" stroke="#3a46b0" stroke-width="0.9"/><path d="M0.8 9.8 L3.2 5.4 H12.6 L10 9.8Z" fill="#a9d0f4" stroke="#3a56b8" stroke-width="0.9"/></svg><div class="t" style="left:20px;top:148.1px;font-size:6px;font-weight:bold;color:#2a3ab0">M</div><div class="t" style="left:28px;top:147.1px;font-size:8.4px;font-weight:bold;color:#1f1fd0">S</div><div class="tr" style="letter-spacing:-0.316px;left:36px;top:149.5px">spring_step08_mvc</div><svg style="left:5.4px;top:172.0px" width="8" height="5" viewBox="0 0 8 5"><path d="M0.6 0.6 L4 4 L7.4 0.6" fill="none" stroke="#3a3a3a" stroke-width="1.1"/></svg><svg style="left:19.5px;top:168.5px" width="13" height="11" viewBox="0 0 13 11"><path d="M0.6 2.6 H3.6 L4.4 1.6 H8 V9.6 H0.6Z" fill="#fbf3b4" stroke="#c9b260" stroke-width="0.8"/><path d="M0.6 2.4 V9.6" stroke="#3a46b0" stroke-width="0.9"/><path d="M0.8 9.8 L3.2 5.4 H12.6 L10 9.8Z" fill="#a9d0f4" stroke="#3a56b8" stroke-width="0.9"/></svg><div class="t" style="left:20px;top:166.3px;font-size:6px;font-weight:bold;color:#2a3ab0">M</div><div class="t" style="left:28px;top:165.3px;font-size:8.4px;font-weight:bold;color:#1f1fd0">S</div><div class="tr" style="letter-spacing:-0.293px;left:36px;top:167.7px">spring_step09_mvc_jdbc</div><svg style="left:21.4px;top:190.2px" width="8" height="5" viewBox="0 0 8 5"><path d="M0.6 0.6 L4 4 L7.4 0.6" fill="none" stroke="#3a3a3a" stroke-width="1.1"/></svg><svg style="left:35.5px;top:185.7px" width="13" height="11" viewBox="0 0 13 11"><path d="M0.6 1.2 H4.2 L5.2 2.4 H10.6 V9.6 H0.6Z" fill="#f6dfa0" stroke="#b9902e" stroke-width="0.9"/><path d="M0.8 9.8 L3 5 H12.6 L10.2 9.8Z" fill="#fcedbc" stroke="#b9902e" stroke-width="0.9"/></svg><svg style="left:42px;top:184.1px" width="7" height="6" viewBox="0 0 7 6"><path d="M0 2 H7 M0 4.2 H7 M2.2 0 V6 M4.8 0 V6" stroke="#8e4a1a" stroke-width="1"/></svg><div class="tr" style="letter-spacing:-0.832px;left:52px;top:185.9px">src</div><svg style="left:37.4px;top:208.4px" width="8" height="5" viewBox="0 0 8 5"><path d="M0.6 0.6 L4 4 L7.4 0.6" fill="none" stroke="#3a3a3a" stroke-width="1.1"/></svg><svg style="left:53px;top:204.20000000000002px" width="10" height="10" viewBox="0 0 10 10"><rect x="0.5" y="0.5" width="8.8" height="8.8" fill="#e9c79c" stroke="#a8743a" stroke-width="0.9"/><path d="M4.9 0.5 V9.3 M0.5 4.9 H9.3" stroke="#9a6a34" stroke-width="1.3"/></svg><div class="tr" style="letter-spacing:0.224px;left:68px;top:204.1px">controller</div><svg style="left:55.4px;top:224.1px" width="5" height="8" viewBox="0 0 5 8"><path d="M0.6 0.6 L4 4 L0.6 7.4" fill="none" stroke="#a4a4a4" stroke-width="1"/></svg><svg style="left:69.2px;top:221.5px" width="10" height="12" viewBox="0 0 10 12"><path d="M0.5 0.5 H6.4 L9.4 3.4 V11.5 H0.5Z" fill="#fff" stroke="#8a8f9e" stroke-width="0.9"/><path d="M6.4 0.5 V3.4 H9.4" fill="#e8e2c4" stroke="#8a8f9e" stroke-width="0.7"/><path d="M5.6 3.6 V7.6 Q5.6 9.4 3.8 9.2 Q2.8 9 2.8 8" fill="none" stroke="#2a55a8" stroke-width="1.4"/></svg><div class="t" style="left:76.2px;top:218.5px;font-size:8px;font-weight:bold;color:#1f1fd0">S</div><div class="tr" style="letter-spacing:-0.076px;left:84px;top:222.3px">UserController.java</div><svg style="left:37.4px;top:244.8px" width="8" height="5" viewBox="0 0 8 5"><path d="M0.6 0.6 L4 4 L7.4 0.6" fill="none" stroke="#3a3a3a" stroke-width="1.1"/></svg><svg style="left:53px;top:240.6px" width="10" height="10" viewBox="0 0 10 10"><rect x="0.5" y="0.5" width="8.8" height="8.8" fill="#e9c79c" stroke="#a8743a" stroke-width="0.9"/><path d="M4.9 0.5 V9.3 M0.5 4.9 H9.3" stroke="#9a6a34" stroke-width="1.3"/></svg><div class="tr" style="letter-spacing:0.267px;left:68px;top:240.5px">entity</div><svg style="left:55.4px;top:260.5px" width="5" height="8" viewBox="0 0 5 8"><path d="M0.6 0.6 L4 4 L0.6 7.4" fill="none" stroke="#a4a4a4" stroke-width="1"/></svg><svg style="left:69.2px;top:257.9px" width="10" height="12" viewBox="0 0 10 12"><path d="M0.5 0.5 H6.4 L9.4 3.4 V11.5 H0.5Z" fill="#fff" stroke="#8a8f9e" stroke-width="0.9"/><path d="M6.4 0.5 V3.4 H9.4" fill="#e8e2c4" stroke="#8a8f9e" stroke-width="0.7"/><path d="M5.6 3.6 V7.6 Q5.6 9.4 3.8 9.2 Q2.8 9 2.8 8" fill="none" stroke="#2a55a8" stroke-width="1.4"/></svg><div class="tr" style="letter-spacing:-0.380px;left:84px;top:258.7px">User.java</div><svg style="left:37.4px;top:281.1px" width="8" height="5" viewBox="0 0 8 5"><path d="M0.6 0.6 L4 4 L7.4 0.6" fill="none" stroke="#3a3a3a" stroke-width="1.1"/></svg><svg style="left:53px;top:276.9px" width="10" height="10" viewBox="0 0 10 10"><rect x="0.5" y="0.5" width="8.8" height="8.8" fill="#e9c79c" stroke="#a8743a" stroke-width="0.9"/><path d="M4.9 0.5 V9.3 M0.5 4.9 H9.3" stroke="#9a6a34" stroke-width="1.3"/></svg><div class="tr" style="letter-spacing:0.183px;left:68px;top:276.8px">model</div><svg style="left:55.4px;top:296.8px" width="5" height="8" viewBox="0 0 5 8"><path d="M0.6 0.6 L4 4 L0.6 7.4" fill="none" stroke="#a4a4a4" stroke-width="1"/></svg><svg style="left:69.2px;top:294.2px" width="10" height="12" viewBox="0 0 10 12"><path d="M0.5 0.5 H6.4 L9.4 3.4 V11.5 H0.5Z" fill="#fff" stroke="#8a8f9e" stroke-width="0.9"/><path d="M6.4 0.5 V3.4 H9.4" fill="#e8e2c4" stroke="#8a8f9e" stroke-width="0.7"/><path d="M5.6 3.6 V7.6 Q5.6 9.4 3.8 9.2 Q2.8 9 2.8 8" fill="none" stroke="#2a55a8" stroke-width="1.4"/></svg><div class="t" style="left:76.2px;top:291.2px;font-size:8px;font-weight:bold;color:#1f1fd0">S</div><div class="tr" style="letter-spacing:-0.284px;left:84px;top:295.0px">UserDao.java</div><svg style="left:55.4px;top:315.0px" width="5" height="8" viewBox="0 0 5 8"><path d="M0.6 0.6 L4 4 L0.6 7.4" fill="none" stroke="#a4a4a4" stroke-width="1"/></svg><svg style="left:69.2px;top:312.4px" width="10" height="12" viewBox="0 0 10 12"><path d="M0.5 0.5 H6.4 L9.4 3.4 V11.5 H0.5Z" fill="#fff" stroke="#8a8f9e" stroke-width="0.9"/><path d="M6.4 0.5 V3.4 H9.4" fill="#e8e2c4" stroke="#8a8f9e" stroke-width="0.7"/><path d="M5.6 3.6 V7.6 Q5.6 9.4 3.8 9.2 Q2.8 9 2.8 8" fill="none" stroke="#2a55a8" stroke-width="1.4"/></svg><div class="t" style="left:76.2px;top:309.4px;font-size:8px;font-weight:bold;color:#1f1fd0">S</div><div class="tr" style="letter-spacing:-0.401px;left:84px;top:313.2px">UserService.java</div><svg style="left:23.4px;top:333.2px" width="5" height="8" viewBox="0 0 5 8"><path d="M0.6 0.6 L4 4 L0.6 7.4" fill="none" stroke="#a4a4a4" stroke-width="1"/></svg><svg style="left:36px;top:331.6px" width="12" height="10" viewBox="0 0 12 10"><rect x="0.6" y="0.4" width="6.6" height="2.8" fill="#2f8f8c" stroke="#1d5f6a" stroke-width="0.5"/><rect x="0.2" y="3.4" width="7.2" height="2.8" fill="#8a4a30" stroke="#5a2a1a" stroke-width="0.5"/><rect x="0" y="6.4" width="7.8" height="3" fill="#ea8a3c" stroke="#b05a1a" stroke-width="0.5"/><path d="M7.6 9.4 L9.4 0.8 L11.8 9.4 L10.4 9.4 L9.4 5 L8.8 9.4Z" fill="#ea9a3c" stroke="#b06a1a" stroke-width="0.4"/></svg><div class="tr" style="letter-spacing:-0.444px;left:52px;top:331.4px">JRE System Library <span style="color:#b3a06a">[JavaSE-1.8]</span></div><svg style="left:23.4px;top:351.4px" width="5" height="8" viewBox="0 0 5 8"><path d="M0.6 0.6 L4 4 L0.6 7.4" fill="none" stroke="#a4a4a4" stroke-width="1"/></svg><svg style="left:36px;top:349.8px" width="12" height="10" viewBox="0 0 12 10"><rect x="0.6" y="0.4" width="6.6" height="2.8" fill="#2f8f8c" stroke="#1d5f6a" stroke-width="0.5"/><rect x="0.2" y="3.4" width="7.2" height="2.8" fill="#8a4a30" stroke="#5a2a1a" stroke-width="0.5"/><rect x="0" y="6.4" width="7.8" height="3" fill="#ea8a3c" stroke="#b05a1a" stroke-width="0.5"/><path d="M7.6 9.4 L9.4 0.8 L11.8 9.4 L10.4 9.4 L9.4 5 L8.8 9.4Z" fill="#ea9a3c" stroke="#b06a1a" stroke-width="0.4"/></svg><div class="tr" style="letter-spacing:0.054px;left:52px;top:349.6px">Apache Tomcat v9.0 [Apache Tomcat v9.</div><svg style="left:23.4px;top:369.6px" width="5" height="8" viewBox="0 0 5 8"><path d="M0.6 0.6 L4 4 L0.6 7.4" fill="none" stroke="#a4a4a4" stroke-width="1"/></svg><svg style="left:36px;top:368.0px" width="12" height="10" viewBox="0 0 12 10"><rect x="0.6" y="0.4" width="6.6" height="2.8" fill="#2f8f8c" stroke="#1d5f6a" stroke-width="0.5"/><rect x="0.2" y="3.4" width="7.2" height="2.8" fill="#8a4a30" stroke="#5a2a1a" stroke-width="0.5"/><rect x="0" y="6.4" width="7.8" height="3" fill="#ea8a3c" stroke="#b05a1a" stroke-width="0.5"/><path d="M7.6 9.4 L9.4 0.8 L11.8 9.4 L10.4 9.4 L9.4 5 L8.8 9.4Z" fill="#ea9a3c" stroke="#b06a1a" stroke-width="0.4"/></svg><div class="tr" style="letter-spacing:0.051px;left:52px;top:367.8px">Maven Dependencies</div><svg style="left:23.4px;top:387.8px" width="5" height="8" viewBox="0 0 5 8"><path d="M0.6 0.6 L4 4 L0.6 7.4" fill="none" stroke="#a4a4a4" stroke-width="1"/></svg><svg style="left:35.5px;top:385.8px" width="13" height="11" viewBox="0 0 13 11"><path d="M0.6 1.2 H4.2 L5.2 2.4 H10.6 V9.6 H0.6Z" fill="#f6dfa0" stroke="#b9902e" stroke-width="0.9"/><path d="M0.8 9.8 L3 5 H12.6 L10.2 9.8Z" fill="#fcedbc" stroke="#b9902e" stroke-width="0.9"/></svg><div class="tr" style="letter-spacing:0.468px;left:52px;top:386.0px">build</div><svg style="left:23.4px;top:406.0px" width="5" height="8" viewBox="0 0 5 8"><path d="M0.6 0.6 L4 4 L0.6 7.4" fill="none" stroke="#a4a4a4" stroke-width="1"/></svg><svg style="left:35.5px;top:404.0px" width="13" height="11" viewBox="0 0 13 11"><path d="M0.6 1.2 H4.2 L5.2 2.4 H10.6 V9.6 H0.6Z" fill="#f6dfa0" stroke="#b9902e" stroke-width="0.9"/><path d="M0.8 9.8 L3 5 H12.6 L10.2 9.8Z" fill="#fcedbc" stroke="#b9902e" stroke-width="0.9"/></svg><div class="tr" style="letter-spacing:0.167px;left:52px;top:404.2px">target</div><svg style="left:21.4px;top:426.7px" width="8" height="5" viewBox="0 0 8 5"><path d="M0.6 0.6 L4 4 L7.4 0.6" fill="none" stroke="#3a3a3a" stroke-width="1.1"/></svg><svg style="left:35.5px;top:422.20000000000005px" width="13" height="11" viewBox="0 0 13 11"><path d="M0.6 1.2 H4.2 L5.2 2.4 H10.6 V9.6 H0.6Z" fill="#f6dfa0" stroke="#b9902e" stroke-width="0.9"/><path d="M0.8 9.8 L3 5 H12.6 L10.2 9.8Z" fill="#fcedbc" stroke="#b9902e" stroke-width="0.9"/></svg><div class="t" style="left:45px;top:417.6px;font-size:8px;font-weight:bold;color:#1f1fd0">S</div><div class="tr" style="letter-spacing:-0.009px;left:52px;top:422.4px">web</div><svg style="left:39.4px;top:442.4px" width="5" height="8" viewBox="0 0 5 8"><path d="M0.6 0.6 L4 4 L0.6 7.4" fill="none" stroke="#a4a4a4" stroke-width="1"/></svg><svg style="left:51.5px;top:440.40000000000003px" width="13" height="11" viewBox="0 0 13 11"><path d="M0.6 1.2 H4.2 L5.2 2.4 H10.6 V9.6 H0.6Z" fill="#f6dfa0" stroke="#b9902e" stroke-width="0.9"/><path d="M0.8 9.8 L3 5 H12.6 L10.2 9.8Z" fill="#fcedbc" stroke="#b9902e" stroke-width="0.9"/></svg><div class="tr" style="letter-spacing:-0.222px;left:68px;top:440.6px">META-INF</div><svg style="left:37.4px;top:463.1px" width="8" height="5" viewBox="0 0 8 5"><path d="M0.6 0.6 L4 4 L7.4 0.6" fill="none" stroke="#3a3a3a" stroke-width="1.1"/></svg><svg style="left:51.5px;top:458.6px" width="13" height="11" viewBox="0 0 13 11"><path d="M0.6 1.2 H4.2 L5.2 2.4 H10.6 V9.6 H0.6Z" fill="#f6dfa0" stroke="#b9902e" stroke-width="0.9"/><path d="M0.8 9.8 L3 5 H12.6 L10.2 9.8Z" fill="#fcedbc" stroke="#b9902e" stroke-width="0.9"/></svg><div class="t" style="left:61px;top:454.0px;font-size:8px;font-weight:bold;color:#1f1fd0">S</div><div class="tr" style="letter-spacing:-0.482px;left:68px;top:458.8px">WEB-INF</div><svg style="left:55.4px;top:478.7px" width="5" height="8" viewBox="0 0 5 8"><path d="M0.6 0.6 L4 4 L0.6 7.4" fill="none" stroke="#a4a4a4" stroke-width="1"/></svg><svg style="left:67.5px;top:476.70000000000005px" width="13" height="11" viewBox="0 0 13 11"><path d="M0.6 1.2 H4.2 L5.2 2.4 H10.6 V9.6 H0.6Z" fill="#f6dfa0" stroke="#b9902e" stroke-width="0.9"/><path d="M0.8 9.8 L3 5 H12.6 L10.2 9.8Z" fill="#fcedbc" stroke="#b9902e" stroke-width="0.9"/></svg><div class="tr" style="letter-spacing:0.329px;left:84px;top:476.9px">lib</div><svg style="left:53.4px;top:499.4px" width="8" height="5" viewBox="0 0 8 5"><path d="M0.6 0.6 L4 4 L7.4 0.6" fill="none" stroke="#3a3a3a" stroke-width="1.1"/></svg><svg style="left:67.5px;top:494.90000000000003px" width="13" height="11" viewBox="0 0 13 11"><path d="M0.6 1.2 H4.2 L5.2 2.4 H10.6 V9.6 H0.6Z" fill="#f6dfa0" stroke="#b9902e" stroke-width="0.9"/><path d="M0.8 9.8 L3 5 H12.6 L10.2 9.8Z" fill="#fcedbc" stroke="#b9902e" stroke-width="0.9"/></svg><div class="tr" style="letter-spacing:-0.260px;left:84px;top:495.1px">table_schema</div><svg style="left:85.2px;top:512.5px" width="10" height="12" viewBox="0 0 10 12"><path d="M0.5 0.5 H6.4 L9.4 3.4 V11.5 H0.5Z" fill="#fff" stroke="#8a8f9e" stroke-width="0.9"/><path d="M6.4 0.5 V3.4 H9.4" fill="#e8e2c4" stroke="#8a8f9e" stroke-width="0.7"/><rect x="2" y="4.4" width="5.6" height="5.6" fill="#eaf0fa" stroke="#3f6fa8" stroke-width="0.8"/><path d="M2 6.4 H7.6 M4.4 4.4 V10" stroke="#3f6fa8" stroke-width="0.7"/></svg><div class="a" style="left:81px;top:510.0px;width:66px;height:17px;background:#e3e3e6"></div><svg style="left:86px;top:512.5px" width="10" height="12" viewBox="0 0 10 12"><path d="M0.5 0.5 H6.4 L9.4 3.4 V11.5 H0.5Z" fill="#fff" stroke="#8a8f9e" stroke-width="0.9"/><path d="M6.4 0.5 V3.4 H9.4" fill="#e8e2c4" stroke="#8a8f9e" stroke-width="0.7"/><rect x="2" y="4.4" width="5.6" height="5.6" fill="#eaf0fa" stroke="#3f6fa8" stroke-width="0.8"/><path d="M2 6.4 H7.6 M4.4 4.4 V10" stroke="#3f6fa8" stroke-width="0.7"/></svg><div class="tr" style="letter-spacing:-0.344px;left:100px;top:513.3px">user1.sql</div><svg style="left:53.4px;top:535.8px" width="8" height="5" viewBox="0 0 8 5"><path d="M0.6 0.6 L4 4 L7.4 0.6" fill="none" stroke="#3a3a3a" stroke-width="1.1"/></svg><svg style="left:67.5px;top:531.3000000000001px" width="13" height="11" viewBox="0 0 13 11"><path d="M0.6 1.2 H4.2 L5.2 2.4 H10.6 V9.6 H0.6Z" fill="#f6dfa0" stroke="#b9902e" stroke-width="0.9"/><path d="M0.8 9.8 L3 5 H12.6 L10.2 9.8Z" fill="#fcedbc" stroke="#b9902e" stroke-width="0.9"/></svg><div class="tr" style="letter-spacing:-0.177px;left:84px;top:531.5px">view</div><svg style="left:85.2px;top:548.9px" width="10" height="12" viewBox="0 0 10 12"><path d="M0.5 0.5 H6.4 L9.4 3.4 V11.5 H0.5Z" fill="#fff" stroke="#8a8f9e" stroke-width="0.9"/><path d="M6.4 0.5 V3.4 H9.4" fill="#e8e2c4" stroke="#8a8f9e" stroke-width="0.7"/><path d="M2 5 H5 M2 7 H7 M2 9 H6" stroke="#b0a27a" stroke-width="0.8"/><rect x="2" y="4.6" width="2" height="1" fill="#d05a4a"/></svg><div class="tr" style="letter-spacing:-0.143px;left:100px;top:549.7px">insert.jsp</div><svg style="left:85.2px;top:567.1px" width="10" height="12" viewBox="0 0 10 12"><path d="M0.5 0.5 H6.4 L9.4 3.4 V11.5 H0.5Z" fill="#fff" stroke="#8a8f9e" stroke-width="0.9"/><path d="M6.4 0.5 V3.4 H9.4" fill="#e8e2c4" stroke="#8a8f9e" stroke-width="0.7"/><path d="M2 5 H5 M2 7 H7 M2 9 H6" stroke="#b0a27a" stroke-width="0.8"/><rect x="2" y="4.6" width="2" height="1" fill="#d05a4a"/></svg><div class="tr" style="letter-spacing:-0.168px;left:100px;top:567.9px">list.jsp</div><svg style="left:69.2px;top:585.3px" width="10" height="12" viewBox="0 0 10 12"><path d="M0.5 0.5 H6.4 L9.4 3.4 V11.5 H0.5Z" fill="#fff" stroke="#8a8f9e" stroke-width="0.9"/><path d="M6.4 0.5 V3.4 H9.4" fill="#e8e2c4" stroke="#8a8f9e" stroke-width="0.7"/><path d="M3 4.4 L6.6 9.6 M6.6 4.4 L3 9.6" stroke="#3a5a9a" stroke-width="1.1"/></svg><div class="t" style="left:76.2px;top:582.3px;font-size:8px;font-weight:bold;color:#1f1fd0">S</div><div class="a" style="left:67.2px;top:593.3px;width:5px;height:5px;border-radius:3px;background:#c0602a"></div><div class="tr" style="letter-spacing:0.085px;left:84px;top:586.1px">applicationContext.xml</div><svg style="left:69.2px;top:603.5px" width="10" height="12" viewBox="0 0 10 12"><path d="M0.5 0.5 H6.4 L9.4 3.4 V11.5 H0.5Z" fill="#fff" stroke="#8a8f9e" stroke-width="0.9"/><path d="M6.4 0.5 V3.4 H9.4" fill="#e8e2c4" stroke="#8a8f9e" stroke-width="0.7"/><path d="M3 4.4 L6.6 9.6 M6.6 4.4 L3 9.6" stroke="#3a5a9a" stroke-width="1.1"/></svg><div class="t" style="left:76.2px;top:600.5px;font-size:8px;font-weight:bold;color:#1f1fd0">S</div><div class="a" style="left:67.2px;top:611.5px;width:5px;height:5px;border-radius:3px;background:#c0602a"></div><div class="tr" style="letter-spacing:-0.183px;left:84px;top:604.3px">mvc-servlet.xml</div><svg style="left:69.2px;top:621.7px" width="10" height="12" viewBox="0 0 10 12"><path d="M0.5 0.5 H6.4 L9.4 3.4 V11.5 H0.5Z" fill="#fff" stroke="#8a8f9e" stroke-width="0.9"/><path d="M6.4 0.5 V3.4 H9.4" fill="#e8e2c4" stroke="#8a8f9e" stroke-width="0.7"/><path d="M3 4.4 L6.6 9.6 M6.6 4.4 L3 9.6" stroke="#3a5a9a" stroke-width="1.1"/></svg><div class="tr" style="letter-spacing:-0.203px;left:84px;top:622.5px">web.xml</div><svg style="left:53.2px;top:639.9px" width="10" height="12" viewBox="0 0 10 12"><path d="M0.5 0.5 H6.4 L9.4 3.4 V11.5 H0.5Z" fill="#fff" stroke="#8a8f9e" stroke-width="0.9"/><path d="M6.4 0.5 V3.4 H9.4" fill="#e8e2c4" stroke="#8a8f9e" stroke-width="0.7"/><path d="M2 5 H5 M2 7 H7 M2 9 H6" stroke="#b0a27a" stroke-width="0.8"/><rect x="2" y="4.6" width="2" height="1" fill="#d05a4a"/></svg><div class="tr" style="letter-spacing:-0.118px;left:68px;top:640.7px">index.jsp</div><svg style="left:37.2px;top:658.0px" width="10" height="12" viewBox="0 0 10 12"><path d="M0.5 0.5 H6.4 L9.4 3.4 V11.5 H0.5Z" fill="#fff" stroke="#8a8f9e" stroke-width="0.9"/><path d="M6.4 0.5 V3.4 H9.4" fill="#e8e2c4" stroke="#8a8f9e" stroke-width="0.7"/></svg><div class="a" style="left:38.2px;top:663.0px;width:8px;height:6px;background:#3f6fc8"></div><div class="t" style="left:39.2px;top:663.5px;font-size:6px;font-weight:bold;color:#fff">M</div><div class="tr" style="letter-spacing:-0.007px;left:52px;top:658.8px">pom.xml</div></div>
<div class="a" style="left:319px;top:240px;width:1172px;height:732px;background:#d3dff0;border-radius:6px 6px 4px 4px;border:1px solid #f3f5fd;border-right-color:#c2c3cc"></div>
<div class="a" style="left:320px;top:241px;width:1170px;height:24px;background:#d7e2f2;border-radius:5px 5px 0 0"></div>
<div class="a" style="left:320px;top:264px;width:1170px;height:1px;background:#b9c6dc"></div>
<div class="a" style="left:321px;top:265px;width:1168px;height:57px;background:#d3dff0"></div>
<div class="a" style="left:321px;top:322px;width:1168px;height:645px;background:#fff"></div>
<div class="a" style="left:321px;top:322px;width:11px;height:628px;background:#f7f7fa"></div>
<div class="a" style="left:1462px;top:322px;width:16px;height:645px;background:#f2f1f4"></div>
<div class="a" style="left:1478px;top:322px;width:11px;height:645px;background:#f9f8fb"></div>
<div class="a" style="left:363px;top:950px;width:1099px;height:17px;background:#f2f1f4"></div>
<div class="a" style="left:321px;top:950px;width:42px;height:17px;background:#fafafc"></div>
<div class="a" style="left:320px;top:967px;width:1170px;height:4px;background:#cfdcee"></div>
<div class="a" style="left:1120px;top:241px;width:85px;height:24px;background:#fff;border-radius:5px 5px 0 0;border:1px solid #c3cde0;border-bottom:none"></div>
<svg style="left:326px;top:247px" width="10" height="12" viewBox="0 0 10 12"><path d="M0.5 0.5 H6 L9 3.4 V11.5 H0.5Z" fill="#fdfdfd" stroke="#8f95a8" stroke-width="0.9"/><path d="M6 0.5 V3.4 H9" fill="#e8e2c4" stroke="#8f95a8" stroke-width="0.7"/><path d="M2 4.6 H6.4 M2 6.6 H6.4 M2 8.6 H5.4" stroke="#a4a8b8" stroke-width="0.8"/></svg><div class="t" style="letter-spacing:-0.221px;left:339px;top:248px;font-size:12px;color:#111">spring_step09_mvc_jdbc.txt</div><svg style="left:508px;top:247px" width="10" height="12" viewBox="0 0 10 12"><path d="M0.5 0.5 H6 L9 3.4 V11.5 H0.5Z" fill="#fdfdfd" stroke="#8f95a8" stroke-width="0.9"/><path d="M6 0.5 V3.4 H9" fill="#e8e2c4" stroke="#8f95a8" stroke-width="0.7"/><path d="M5.4 3.6 V7.4 Q5.4 9 3.8 8.8 Q3 8.6 3 7.8" fill="none" stroke="#4a5a7a" stroke-width="1.1"/></svg><div class="t" style="letter-spacing:-0.055px;left:521px;top:248px;font-size:12px;color:#111">UserController.java</div><svg style="left:647px;top:247px" width="10" height="12" viewBox="0 0 10 12"><path d="M0.5 0.5 H6 L9 3.4 V11.5 H0.5Z" fill="#fdfdfd" stroke="#8f95a8" stroke-width="0.9"/><path d="M6 0.5 V3.4 H9" fill="#e8e2c4" stroke="#8f95a8" stroke-width="0.7"/><path d="M5.4 3.6 V7.4 Q5.4 9 3.8 8.8 Q3 8.6 3 7.8" fill="none" stroke="#4a5a7a" stroke-width="1.1"/></svg><div class="t" style="letter-spacing:-0.309px;left:661px;top:248px;font-size:12px;color:#111">UserDao.java</div><svg style="left:756px;top:247px" width="10" height="12" viewBox="0 0 10 12"><path d="M0.5 0.5 H6 L9 3.4 V11.5 H0.5Z" fill="#fdfdfd" stroke="#8f95a8" stroke-width="0.9"/><path d="M6 0.5 V3.4 H9" fill="#e8e2c4" stroke="#8f95a8" stroke-width="0.7"/><path d="M5.4 3.6 V7.4 Q5.4 9 3.8 8.8 Q3 8.6 3 7.8" fill="none" stroke="#4a5a7a" stroke-width="1.1"/></svg><div class="t" style="letter-spacing:-0.419px;left:770px;top:248px;font-size:12px;color:#111">UserService.java</div><svg style="left:880px;top:247px" width="10" height="12" viewBox="0 0 10 12"><path d="M0.5 0.5 H6 L9 3.4 V11.5 H0.5Z" fill="#fdfdfd" stroke="#8f95a8" stroke-width="0.9"/><path d="M6 0.5 V3.4 H9" fill="#e8e2c4" stroke="#8f95a8" stroke-width="0.7"/><path d="M2 5 H5 M2 7 H6.6 M2 9 H5.6" stroke="#b0a27a" stroke-width="0.8"/><rect x="2" y="4.4" width="2" height="1" fill="#d05a4a"/></svg><div class="t" style="letter-spacing:-0.168px;left:893px;top:248px;font-size:12px;color:#111">list.jsp</div><svg style="left:951px;top:247px" width="10" height="12" viewBox="0 0 10 12"><path d="M0.5 0.5 H6 L9 3.4 V11.5 H0.5Z" fill="#fdfdfd" stroke="#8f95a8" stroke-width="0.9"/><path d="M6 0.5 V3.4 H9" fill="#e8e2c4" stroke="#8f95a8" stroke-width="0.7"/><path d="M2 5 H5 M2 7 H6.6 M2 9 H5.6" stroke="#b0a27a" stroke-width="0.8"/><rect x="2" y="4.4" width="2" height="1" fill="#d05a4a"/></svg><div class="t" style="letter-spacing:-0.203px;left:965px;top:248px;font-size:12px;color:#111">insert.jsp</div><svg style="left:1037px;top:247px" width="10" height="12" viewBox="0 0 10 12"><path d="M0.5 0.5 H6 L9 3.4 V11.5 H0.5Z" fill="#fdfdfd" stroke="#8f95a8" stroke-width="0.9"/><path d="M6 0.5 V3.4 H9" fill="#e8e2c4" stroke="#8f95a8" stroke-width="0.7"/><path d="M2 5 H5 M2 7 H6.6 M2 9 H5.6" stroke="#b0a27a" stroke-width="0.8"/><rect x="2" y="4.4" width="2" height="1" fill="#d05a4a"/></svg><div class="t" style="letter-spacing:-0.042px;left:1051px;top:248px;font-size:12px;color:#111">index.jsp</div><svg style="left:1124px;top:247px" width="10" height="12" viewBox="0 0 10 12"><path d="M0.5 0.5 H6 L9 3.4 V11.5 H0.5Z" fill="#fdfdfd" stroke="#8f95a8" stroke-width="0.9"/><path d="M6 0.5 V3.4 H9" fill="#e8e2c4" stroke="#8f95a8" stroke-width="0.7"/><rect x="2.4" y="4.4" width="5.4" height="5.6" fill="#eaf0fa" stroke="#3f6fa8" stroke-width="0.8"/><path d="M2.4 6.4 H7.8 M4.6 4.4 V10" stroke="#3f6fa8" stroke-width="0.7"/></svg><div class="t" style="letter-spacing:-0.411px;left:1138px;top:248px;font-size:12px;color:#111">user1.sql</div><svg style="left:1188px;top:248px" width="10" height="9" viewBox="0 0 10 9"><path d="M0.5 0.5 L3 0.5 L5 2.8 L7 0.5 H9.5 L6.4 4.5 L9.5 8.5 H7 L5 6.2 L3 8.5 H0.5 L3.6 4.5Z" fill="none" stroke="#666" stroke-width="0.9"/></svg>
<svg style="left:1453px;top:246px" width="9" height="4" viewBox="0 0 9 4"><rect x="0.5" y="0.5" width="7.5" height="2.6" fill="#fff" stroke="#555" stroke-width="0.9"/></svg>
<svg style="left:1471px;top:246px" width="8" height="7" viewBox="0 0 8 7"><rect x="2.5" y="0.5" width="4.6" height="3.4" fill="#fff" stroke="#555" stroke-width="0.9"/><rect x="0.5" y="2.4" width="4.6" height="3.4" fill="#fff" stroke="#555" stroke-width="0.9"/></svg>
<div class="t" style="letter-spacing:0.236px;left:338px;top:272.4px;font-size:12px;color:#111">Connection <u>p</u>rofile</div>
<div class="t" style="left:338px;top:295px;font-size:12px;color:#111"><u>T</u>ype:</div>
<div class="a" style="left:369px;top:290px;width:368px;height:22px;background:#e6e6e8;border:1px solid #c6c8d0;border-bottom-color:#b4b6c0"></div>
<div class="t" style="left:373px;top:295px;font-size:12px;color:#111">Oracle_11</div>
<div class="t" style="left:741px;top:295px;font-size:12px;color:#111"><u>N</u>ame:</div>
<div class="a" style="left:778px;top:290px;width:198px;height:22px;background:#e6e6e8;border:1px solid #c6c8d0;border-bottom-color:#b4b6c0"></div>
<div class="t" style="left:782px;top:295px;font-size:12px;color:#111">New Oracle</div>
<div class="t" style="left:979px;top:295px;font-size:12px;color:#111">Data<u>b</u>ase:</div>
<div class="a" style="left:1036px;top:290px;width:148px;height:22px;background:#e6e6e8;border:1px solid #c6c8d0;border-bottom-color:#b4b6c0"></div>
<div class="t" style="left:1040px;top:295px;font-size:12px;color:#111">XE</div>
<div class="t" style="left:1188px;top:295px;font-size:12.1px;color:#111">Status: Connected, Auto Commit</div>
<svg style="left:724px;top:298px" width="9" height="6" viewBox="0 0 9 6"><path d="M0.8 0.8 L4.5 4.6 L8.2 0.8" fill="none" stroke="#444" stroke-width="1.1"/></svg><svg style="left:963px;top:298px" width="9" height="6" viewBox="0 0 9 6"><path d="M0.8 0.8 L4.5 4.6 L8.2 0.8" fill="none" stroke="#444" stroke-width="1.1"/></svg><svg style="left:1171px;top:298px" width="9" height="6" viewBox="0 0 9 6"><path d="M0.8 0.8 L4.5 4.6 L8.2 0.8" fill="none" stroke="#444" stroke-width="1.1"/></svg>
<div class="a" style="left:364px;top:449px;width:1098px;height:25px;background:#e8f2fe"></div>
<div class="a" style="left:322px;top:449px;width:9px;height:25px;background:#7fa8d4;background-image:repeating-linear-gradient(0deg,rgba(255,255,255,.35) 0 1px,transparent 1px 2px)"></div>
<div class="ln" style="top:327.1px">1</div><div class="code" style="top:327.1px"><span class="kw">drop</span> <span class="kw">table</span> user1;</div><div class="ln" style="top:352.4px">2</div><div class="ln" style="top:377.8px">3</div><div class="code" style="top:377.8px"><span class="kw">create</span> <span class="kw">table</span> user1(</div><div class="ln" style="top:403.1px">4</div><div class="code" style="top:403.1px">name varchar2(10),</div><div class="ln" style="top:428.4px">5</div><div class="code" style="top:428.4px">age number,</div><div class="ln" style="top:453.8px">6</div><div class="code" style="top:453.8px">hobby varchar2(16));</div><div class="ln" style="top:479.1px">7</div><div class="ln" style="top:504.4px">8</div><div class="ln" style="top:529.7px">9</div><div class="code" style="top:529.7px"><span class="kw">select</span> * <span class="kw">from</span> tab;</div><div class="ln" style="top:555.1px">10</div><div class="code" style="top:555.1px"><span class="kw">select</span> * <span class="kw">from</span> user1;</div>
<svg style="left:1465px;top:327px" width="10" height="6" viewBox="0 0 10 6"><path d="M1 5.2 L5 1.2 L9 5.2" fill="none" stroke="#b8b8bc" stroke-width="1.3"/></svg>
<svg style="left:1465px;top:938px" width="10" height="6" viewBox="0 0 10 6"><path d="M1 0.8 L5 4.8 L9 0.8" fill="none" stroke="#b8b8bc" stroke-width="1.3"/></svg>
<svg style="left:367px;top:954px" width="6" height="9" viewBox="0 0 6 9"><path d="M5 0.8 L1.2 4.5 L5 8.2" fill="none" stroke="#b8b8bc" stroke-width="1.3"/></svg>
<svg style="left:1451px;top:954px" width="6" height="9" viewBox="0 0 6 9"><path d="M1 0.8 L4.8 4.5 L1 8.2" fill="none" stroke="#b8b8bc" stroke-width="1.3"/></svg>
<svg style="left:390px;top:536px" width="9" height="15" viewBox="0 0 9 15"><path d="M0.6 0.6 V11.4 L3 9 L5 13.6 L6.6 12.9 L4.6 8.4 H8.2Z" fill="#fff" stroke="#000" stroke-width="0.9"/></svg>
<div class="a" style="left:1492px;top:240px;width:26px;height:82px;background:#e4e6f8;border:1.5px solid #f8f8fe;border-radius:5px"></div>
<div class="a" style="left:1499px;top:246px;width:10px;height:0;border-top:1px dotted #7a7e92"></div>
<svg style="left:1501px;top:254px" width="8" height="7" viewBox="0 0 8 7"><rect x="2.5" y="0.5" width="4.6" height="3.4" fill="#fff" stroke="#555" stroke-width="0.9"/><rect x="0.5" y="2.4" width="4.6" height="3.4" fill="#fff" stroke="#555" stroke-width="0.9"/></svg>
<svg style="left:1499px;top:268px" width="12" height="12" viewBox="0 0 12 12"><rect x="0.5" y="0.5" width="11" height="8" fill="#dbe8f8" stroke="#2f5d9e"/><rect x="2.5" y="4.6" width="7" height="2" fill="#2f5d9e"/><rect x="4.5" y="8.5" width="3" height="1.6" fill="#2f5d9e"/><rect x="2.5" y="10" width="7" height="1.4" fill="#2f5d9e"/></svg>
<svg style="left:1499px;top:286px" width="12" height="12" viewBox="0 0 12 12"><rect x="0" y="1" width="8" height="2" fill="#5a8a3a"/><rect x="0" y="5" width="5" height="2" fill="#5a8a3a"/><circle cx="8.4" cy="8" r="3" fill="#fff" stroke="#2e9a3a" stroke-width="1.3"/></svg>
<svg style="left:1499px;top:303px" width="12" height="13" viewBox="0 0 12 13"><rect x="0.5" y="0.5" width="10" height="11" fill="#fbeeee" stroke="#b06a6a" stroke-width="0.8"/><circle cx="4" cy="4" r="2.2" fill="#e02a2a"/><path d="M7.6 2 V11" stroke="#555" stroke-width="1"/><rect x="1" y="8" width="4" height="3.4" fill="#e8b84a"/></svg>
<div class="t" style="letter-spacing:-0.328px;left:1.4px;top:977px;font-size:12px;color:#111">Database type: Oracle_0.2.0.2.0</div>
<div class="t" style="letter-spacing:0.069px;left:169.2px;top:977px;font-size:12px;color:#111">- 64bit Production,Current profile: New Oracle, Database: XE,connected, Commit Mode: Auto</div>
<div class="a" style="left:994px;top:973px;width:1px;height:19px;background:#b9bccb"></div>
<div class="t" style="left:1000px;top:977px;font-size:12.1px;color:#111">Writable</div>
<div class="a" style="left:1088px;top:973px;width:1px;height:19px;background:#b9bccb"></div>
<div class="t" style="left:1094px;top:977px;font-size:12.1px;color:#111">Insert</div>
<div class="a" style="left:1177px;top:973px;width:1px;height:19px;background:#b9bccb"></div>
<div class="t" style="left:1183px;top:977px;font-size:12.1px;color:#111">6 : 21</div>
<div class="a" style="left:1265px;top:974px;width:0;height:17px;border-left:1px dotted #8a8da0"></div>
<svg style="left:1543px;top:54.6px" width="11" height="7" viewBox="0 0 11 7"><path d="M1 1 L5.5 5.5 L10 1" fill="none" stroke="#555566" stroke-width="1.6" stroke-linecap="round" stroke-linejoin="round"/></svg><div class="t kr" style="left:1618px;top:49px;width:200px;text-align:center;font-size:17px;font-weight:bold;color:#33333d"><span style="font-weight:500">참가자</span>(30)</div>
<div class="a" style="left:1546px;top:92px;width:344px;height:31px;border-radius:8px;background:#f2f2f7"></div>
<div class="a" style="left:1547px;top:93px;width:170px;height:29px;border-radius:7px;background:#fff;box-shadow:0 1px 2px rgba(0,0,0,.10)"></div>
<div class="t kr" style="left:1547px;top:101px;width:170px;text-align:center;font-size:15px;font-weight:bold;color:#0e71eb"><span style="font-weight:500">토론자</span>(6)</div>
<div class="t kr" style="left:1718px;top:101px;width:172px;text-align:center;font-size:15px;font-weight:bold;color:#5f5f73"><span style="font-weight:500">참석자</span>(24)</div>
<div class="a" style="left:1542px;top:146px;width:33px;height:33px;background:#fff"></div>
<div class="t" style="left:1544px;top:151px;font-size:9.4px;font-weight:bold;color:#c40a0a;letter-spacing:-0.3px">MASO</div>
<div class="t" style="left:1543.5px;top:161px;font-size:6.6px;font-weight:bold;color:#111;letter-spacing:-0.25px">CAMPUS</div>
<div class="a" style="left:1544px;top:170px;width:22px;height:1px;background:#c9c9c9"></div>
<div class="a" style="left:1572px;top:152px;width:1px;height:19px;background:#d8878f"></div><div class="pn kr" style="letter-spacing:-0.006px;top:157.2px">Masocampus MM (호스트, 나)</div><svg style="left:1817px;top:157px" width="20" height="14" viewBox="0 0 20 14"><path d="M4.6 13 H15.6 Q19.2 13 19.2 9.8 Q19.2 7.2 16.6 6.6 Q16.2 1 11.4 1 Q7.8 1 6.4 4.4 Q0.8 4.6 0.8 9.4 Q0.8 13 4.6 13Z" fill="#fff" stroke="#8a8a94" stroke-width="1.3"/><circle cx="10" cy="8" r="3.3" fill="#ff3b45"/></svg><svg style="left:1847px;top:153.8px" width="20" height="20" viewBox="0 0 20 20"><path d="M7.2 9 V4.4 Q7.2 1.6 10 1.6 Q12.8 1.6 12.8 4.4 V9.6 Q12.8 12.4 10 12.4" fill="none" stroke="#e02828" stroke-width="1.3"/><path d="M5 9 Q5 14.6 10 14.6 Q15 14.6 15 9" fill="none" stroke="#e02828" stroke-width="1.3"/><path d="M10 14.6 V18 M7 18.2 H13" stroke="#e02828" stroke-width="1.3"/><path d="M0.4 19.4 L19.8 0.4" stroke="#fff" stroke-width="3.4"/><path d="M0.4 19.4 L19.8 0.4" stroke="#e02828" stroke-width="1.3"/></svg><svg style="left:1877px;top:153.8px" width="21" height="20" viewBox="0 0 21 20"><rect x="0.8" y="4.4" width="13.6" height="11.2" rx="2.6" fill="none" stroke="#e02828" stroke-width="1.3"/><path d="M14.4 8.6 L19.6 5.4 V14.6 L14.4 11.4" fill="none" stroke="#e02828" stroke-width="1.3" stroke-linejoin="round"/><path d="M0.4 19.6 L19.8 0.4" stroke="#fff" stroke-width="3.4"/><path d="M0.4 19.6 L19.8 0.4" stroke="#e02828" stroke-width="1.3"/></svg>
<div class="av kr" style="top:196px;background:#27ae60">김</div><svg style="left:1817px;top:206.4px" width="20" height="15" viewBox="0 0 20 15"><rect x="0" y="0" width="20" height="15" rx="2.2" fill="#0ea83f"/><path d="M10 3.4 L6.6 7 H9 V11.4 H11 V7 H13.4Z" fill="#fff"/></svg><svg style="left:1850px;top:205px" width="14" height="19" viewBox="0 0 14 19"><rect x="4.2" y="0.7" width="5.6" height="11" rx="2.8" fill="#fff" stroke="#6e6e7a" stroke-width="1.2"/><path d="M4.2 5.6 H9.8 V9 Q9.8 11.7 7 11.7 Q4.2 11.7 4.2 9Z" fill="#6e6e7a"/><path d="M1.2 8 Q1.2 14 7 14 Q12.8 14 12.8 8" fill="none" stroke="#6e6e7a" stroke-width="1.2"/><path d="M7 14 V17.6 M4 17.8 H10" stroke="#6e6e7a" stroke-width="1.2"/></svg><svg style="left:1877px;top:203.8px" width="21" height="20" viewBox="0 0 21 20"><rect x="0.8" y="4.4" width="13.6" height="11.2" rx="2.6" fill="none" stroke="#e02828" stroke-width="1.3"/><path d="M14.4 8.6 L19.6 5.4 V14.6 L14.4 11.4" fill="none" stroke="#e02828" stroke-width="1.3" stroke-linejoin="round"/><path d="M0.4 19.6 L19.8 0.4" stroke="#fff" stroke-width="3.4"/><path d="M0.4 19.6 L19.8 0.4" stroke="#e02828" stroke-width="1.3"/></svg>
<div class="av kr" style="top:247px;background:#1a9c7c">M</div><div class="pn kr" style="letter-spacing:0.100px;top:258.2px">Masocampus (공동 호스트)</div><svg style="left:1817px;top:258px" width="20" height="14" viewBox="0 0 20 14"><path d="M4.6 13 H15.6 Q19.2 13 19.2 9.8 Q19.2 7.2 16.6 6.6 Q16.2 1 11.4 1 Q7.8 1 6.4 4.4 Q0.8 4.6 0.8 9.4 Q0.8 13 4.6 13Z" fill="#fff" stroke="#8a8a94" stroke-width="1.3"/><circle cx="10" cy="8" r="3.3" fill="#ff3b45"/></svg><svg style="left:1847px;top:254.8px" width="20" height="20" viewBox="0 0 20 20"><path d="M7.2 9 V4.4 Q7.2 1.6 10 1.6 Q12.8 1.6 12.8 4.4 V9.6 Q12.8 12.4 10 12.4" fill="none" stroke="#e02828" stroke-width="1.3"/><path d="M5 9 Q5 14.6 10 14.6 Q15 14.6 15 9" fill="none" stroke="#e02828" stroke-width="1.3"/><path d="M10 14.6 V18 M7 18.2 H13" stroke="#e02828" stroke-width="1.3"/><path d="M0.4 19.4 L19.8 0.4" stroke="#fff" stroke-width="3.4"/><path d="M0.4 19.4 L19.8 0.4" stroke="#e02828" stroke-width="1.3"/></svg><svg style="left:1877px;top:254.8px" width="21" height="20" viewBox="0 0 21 20"><rect x="0.8" y="4.4" width="13.6" height="11.2" rx="2.6" fill="none" stroke="#e02828" stroke-width="1.3"/><path d="M14.4 8.6 L19.6 5.4 V14.6 L14.4 11.4" fill="none" stroke="#e02828" stroke-width="1.3" stroke-linejoin="round"/><path d="M0.4 19.6 L19.8 0.4" stroke="#fff" stroke-width="3.4"/><path d="M0.4 19.6 L19.8 0.4" stroke="#e02828" stroke-width="1.3"/></svg>
<div class="av kr" style="top:298px;background:#1a9c7c">마</div><div class="pn kr" style="letter-spacing:0.584px;top:309.2px">마소캠퍼스 TA (공동 호스트)</div><svg style="left:1817px;top:309px" width="20" height="14" viewBox="0 0 20 14"><path d="M4.6 13 H15.6 Q19.2 13 19.2 9.8 Q19.2 7.2 16.6 6.6 Q16.2 1 11.4 1 Q7.8 1 6.4 4.4 Q0.8 4.6 0.8 9.4 Q0.8 13 4.6 13Z" fill="#fff" stroke="#8a8a94" stroke-width="1.3"/><circle cx="10" cy="8" r="3.3" fill="#ff3b45"/></svg><svg style="left:1847px;top:305.8px" width="20" height="20" viewBox="0 0 20 20"><path d="M7.2 9 V4.4 Q7.2 1.6 10 1.6 Q12.8 1.6 12.8 4.4 V9.6 Q12.8 12.4 10 12.4" fill="none" stroke="#e02828" stroke-width="1.3"/><path d="M5 9 Q5 14.6 10 14.6 Q15 14.6 15 9" fill="none" stroke="#e02828" stroke-width="1.3"/><path d="M10 14.6 V18 M7 18.2 H13" stroke="#e02828" stroke-width="1.3"/><path d="M0.4 19.4 L19.8 0.4" stroke="#fff" stroke-width="3.4"/><path d="M0.4 19.4 L19.8 0.4" stroke="#e02828" stroke-width="1.3"/></svg><svg style="left:1877px;top:305.8px" width="21" height="20" viewBox="0 0 21 20"><rect x="0.8" y="4.4" width="13.6" height="11.2" rx="2.6" fill="none" stroke="#e02828" stroke-width="1.3"/><path d="M14.4 8.6 L19.6 5.4 V14.6 L14.4 11.4" fill="none" stroke="#e02828" stroke-width="1.3" stroke-linejoin="round"/><path d="M0.4 19.6 L19.8 0.4" stroke="#fff" stroke-width="3.4"/><path d="M0.4 19.6 L19.8 0.4" stroke="#e02828" stroke-width="1.3"/></svg>
<div class="av kr" style="top:349px;background:#8e3fb0">마</div><div class="pn kr" style="letter-spacing:0.547px;top:360.2px">마소캠퍼스TA2 (공동 호스트)</div><svg style="left:1817px;top:360px" width="20" height="14" viewBox="0 0 20 14"><path d="M4.6 13 H15.6 Q19.2 13 19.2 9.8 Q19.2 7.2 16.6 6.6 Q16.2 1 11.4 1 Q7.8 1 6.4 4.4 Q0.8 4.6 0.8 9.4 Q0.8 13 4.6 13Z" fill="#fff" stroke="#8a8a94" stroke-width="1.3"/><circle cx="10" cy="8" r="2.2" fill="#ff3b45"/></svg><svg style="left:1847px;top:356.8px" width="20" height="20" viewBox="0 0 20 20"><path d="M7.2 9 V4.4 Q7.2 1.6 10 1.6 Q12.8 1.6 12.8 4.4 V9.6 Q12.8 12.4 10 12.4" fill="none" stroke="#e02828" stroke-width="1.3"/><path d="M5 9 Q5 14.6 10 14.6 Q15 14.6 15 9" fill="none" stroke="#e02828" stroke-width="1.3"/><path d="M10 14.6 V18 M7 18.2 H13" stroke="#e02828" stroke-width="1.3"/><path d="M0.4 19.4 L19.8 0.4" stroke="#fff" stroke-width="3.4"/><path d="M0.4 19.4 L19.8 0.4" stroke="#e02828" stroke-width="1.3"/></svg><svg style="left:1877px;top:356.8px" width="21" height="20" viewBox="0 0 21 20"><rect x="0.8" y="4.4" width="13.6" height="11.2" rx="2.6" fill="none" stroke="#e02828" stroke-width="1.3"/><path d="M14.4 8.6 L19.6 5.4 V14.6 L14.4 11.4" fill="none" stroke="#e02828" stroke-width="1.3" stroke-linejoin="round"/><path d="M0.4 19.6 L19.8 0.4" stroke="#fff" stroke-width="3.4"/><path d="M0.4 19.6 L19.8 0.4" stroke="#e02828" stroke-width="1.3"/></svg>
<div class="av kr" style="top:401px;background:#1a9c7c">M</div><div class="pn kr" style="letter-spacing:-0.376px;top:412.2px">masocampus</div><svg style="left:1847px;top:408.8px" width="20" height="20" viewBox="0 0 20 20"><path d="M7.2 9 V4.4 Q7.2 1.6 10 1.6 Q12.8 1.6 12.8 4.4 V9.6 Q12.8 12.4 10 12.4" fill="none" stroke="#e02828" stroke-width="1.3"/><path d="M5 9 Q5 14.6 10 14.6 Q15 14.6 15 9" fill="none" stroke="#e02828" stroke-width="1.3"/><path d="M10 14.6 V18 M7 18.2 H13" stroke="#e02828" stroke-width="1.3"/><path d="M0.4 19.4 L19.8 0.4" stroke="#fff" stroke-width="3.4"/><path d="M0.4 19.4 L19.8 0.4" stroke="#e02828" stroke-width="1.3"/></svg><svg style="left:1877px;top:408.8px" width="21" height="20" viewBox="0 0 21 20"><rect x="0.8" y="4.4" width="13.6" height="11.2" rx="2.6" fill="none" stroke="#e02828" stroke-width="1.3"/><path d="M14.4 8.6 L19.6 5.4 V14.6 L14.4 11.4" fill="none" stroke="#e02828" stroke-width="1.3" stroke-linejoin="round"/><path d="M0.4 19.6 L19.8 0.4" stroke="#fff" stroke-width="3.4"/><path d="M0.4 19.6 L19.8 0.4" stroke="#e02828" stroke-width="1.3"/></svg>
<div class="btn kr" style="left:1575px;top:581px;width:49px;height:29px;line-height:28px">초대</div>
<div class="btn kr" style="left:1680px;top:581px;width:98px;height:29px;line-height:28px">모두 음소거</div>
<div class="btn" style="left:1834px;top:581px;width:28px;height:29px;line-height:30px;font-size:13px">...</div>
<div class="a" style="left:1544px;top:628px;width:374px;height:1px;background:#ebebf0"></div>
<svg style="left:1543px;top:654px" width="11" height="7" viewBox="0 0 11 7"><path d="M1 1 L5.5 5.5 L10 1" fill="none" stroke="#555566" stroke-width="1.6" stroke-linecap="round" stroke-linejoin="round"/></svg><div class="t kr" style="left:1618px;top:648.8px;width:200px;text-align:center;font-size:17px;font-weight:500;color:#33333d;-webkit-text-stroke:0.3px #33333d">채팅</div>
<div class="a" style="left:1538px;top:686px;width:362px;height:236px;overflow:hidden">
<div class="ch kr" style="letter-spacing:1.059px;left:4.5px;top:-3.4px;font-size:14.6px;color:#80808e">발신자<span style="color:#0e71eb">마소캠퍼스 TA</span>수신자<span style="color:#0e71eb">모든 토론자 및 참석자</span>:</div>
<div class="ch kr" style="letter-spacing:0.601px;left:4.5px;top:23.6px;font-size:18px;color:#3c3c46">한글처리는 <span style="font-size:15.5px">UTF-8</span>로 꼭 수정해서 한글이</div>
<div class="ch kr" style="letter-spacing:0.756px;left:4.5px;top:56.6px;font-size:18px;color:#3c3c46">깨지지 않도록 한다.</div>
<div class="ch kr" style="letter-spacing:0.640px;left:4.5px;top:89.6px;font-size:18px;color:#3c3c46">Model을 항상 제일 먼저 만듭니다</div>
<div class="ch kr" style="letter-spacing:1.059px;left:4.5px;top:134.4px;font-size:14.6px;color:#80808e">발신자<span style="color:#0e71eb">마소캠퍼스 TA</span>수신자<span style="color:#0e71eb">모든 토론자 및 참석자</span>:</div>
<div class="ch kr" style="letter-spacing:0.949px;left:4.5px;top:161.6px;font-size:18px;color:#3c3c46">못따라오신분들은 코드 드렸으니 복붙</div>
<div class="ch kr" style="letter-spacing:0.915px;left:4.5px;top:194.6px;font-size:18px;color:#3c3c46">하셔도 되십니다!!!</div>
</div>
<div class="a" style="left:1904px;top:686px;width:11px;height:236px;border-radius:5px 5px 0 0;background:#f1f1f6"></div>
<div class="a" style="left:1904px;top:847px;width:10px;height:73px;border-radius:5px;background:#a6a6ae"></div>
<div class="a" style="left:1520px;top:924px;width:398px;height:1px;background:#e4e4ea"></div>
<div class="t kr" style="letter-spacing:0.409px;left:1540px;top:946.6px;font-size:15px;color:#33333f">받는 사람:</div>
<div class="a" style="left:1617px;top:941px;width:172px;height:29px;border-radius:8px;background:#f1f1f6"></div>
<div class="t kr" style="letter-spacing:0.137px;left:1626px;top:947.6px;font-size:14.8px;color:#111">모든 토론자 및 참석자</div>
<svg style="left:1769px;top:951px" width="9" height="6" viewBox="0 0 9 6"><path d="M1 1 L4.5 4.5 L8 1" fill="none" stroke="#111" stroke-width="1.7" stroke-linecap="round" stroke-linejoin="round"/></svg>
<div class="a" style="left:1869px;top:939px;width:30px;height:30px;border-radius:8px;border:1px solid #dadae4;background:#fff"></div>
<div class="t" style="left:1876px;top:945px;font-size:13px;color:#444;letter-spacing:1.4px">...</div>
<div class="t kr" style="letter-spacing:0.919px;left:1540px;top:981.6px;font-size:15.4px;color:#8a8a98">여기에 메시지 입력...</div>
<div class="a" style="left:0;top:994px;width:1518px;height:30px;background:linear-gradient(90deg,#1c1a1f 0,#211c20 17%,#3c2527 27%,#4a2c2c 35%,#452a2b 42%,#2c2024 50%,#1f1b20 58%,#1c1a1f 100%)"></div>
<svg style="left:6.5px;top:1000.0px" width="17" height="18" viewBox="0 0 17 18"><path d="M0 2.4 L7.4 1.3 V8.4 H0Z M8.4 1.2 L17 0 V8.4 H8.4Z M0 9.4 H7.4 V16.5 L0 15.4Z M8.4 9.4 H17 V18 L8.4 16.7Z" fill="#fff"/></svg><svg style="left:41.0px;top:1000.0px" width="18" height="18" viewBox="0 0 18 18"><circle cx="11" cy="6.6" r="5.6" fill="none" stroke="#fff" stroke-width="1.5"/><path d="M7 10.8 L0.8 17" stroke="#fff" stroke-width="1.7"/></svg><svg style="left:78.0px;top:1000.5px" width="17" height="17" viewBox="0 0 17 17"><circle cx="8.5" cy="8.5" r="6.6" fill="none" stroke="#fff" stroke-width="2.4"/></svg><svg style="left:113.0px;top:1001.0px" width="18" height="16" viewBox="0 0 18 16"><rect x="1.5" y="3.2" width="10" height="9.6" fill="none" stroke="#fff" stroke-width="1.3"/><path d="M0 1 H13 M0 15.2 H13" stroke="#fff" stroke-width="1.3"/><path d="M15.6 0.4 V3 M15.6 5.6 V10.4 M15.6 13 V15.8" stroke="#fff" stroke-width="1.3"/></svg><svg style="left:152.0px;top:1000.5px" width="16" height="17" viewBox="0 0 16 17"><path d="M1 5 H15 V16 H1Z" fill="#f2f2f2"/><path d="M5 5 V3.4 Q5 0.8 8 0.8 Q11 0.8 11 3.4 V5" fill="none" stroke="#f2f2f2" stroke-width="1.3"/><rect x="5" y="7.6" width="2.6" height="2.6" fill="#e8502a"/><rect x="8.4" y="7.6" width="2.6" height="2.6" fill="#7cba2a"/><rect x="5" y="11" width="2.6" height="2.6" fill="#2a9fe8"/><rect x="8.4" y="11" width="2.6" height="2.6" fill="#f2b91a"/></svg><svg style="left:188.0px;top:1000.0px" width="18" height="18" viewBox="0 0 18 18"><circle cx="9" cy="9" r="8.4" fill="#1a8fd8"/><path d="M1 10 Q2 2 9.6 1.4 Q16.4 1.6 17.2 8.4 Q14 3.8 9 5.4 Q4.6 7 6 12.6 Q2.4 12.6 1 10Z" fill="#3fd08a"/><path d="M6.4 9.4 Q6 15.4 12 16.6 Q8.4 17.8 5 16 Q2 13.6 2.4 10.4Z" fill="#0c5fa8"/></svg><svg style="left:225.0px;top:1000.5px" width="18" height="17" viewBox="0 0 18 17"><path d="M0.5 3 H6.4 L7.8 4.6 H17.5 V15.5 H0.5Z" fill="#f6c33c"/><rect x="0.5" y="6.2" width="17" height="9.3" fill="#fbd96a"/><rect x="4.6" y="10" width="8.8" height="5.5" fill="#3a8ee0"/><rect x="6.6" y="12.4" width="4.8" height="3.1" fill="#fbd96a"/></svg><svg style="left:261.5px;top:1000.5px" width="17" height="17" viewBox="0 0 17 17"><rect x="0" y="0" width="17" height="17" fill="#c2141c"/><text x="8.5" y="13.4" text-anchor="middle" font-family="Liberation Sans,sans-serif" font-size="12.5" font-weight="bold" font-style="italic" fill="#fff" letter-spacing="-0.8">64</text></svg><svg style="left:298.0px;top:1001.0px" width="16" height="16" viewBox="0 0 16 16"><g transform="translate(8,8)"><circle r="4.4" fill="none" stroke="#fff" stroke-width="2"/><g stroke="#fff" stroke-width="2.2"><path d="M0 -7.6 V-5 M0 7.6 V5 M-7.6 0 H-5 M7.6 0 H5 M-5.4 -5.4 L-3.6 -3.6 M5.4 5.4 L3.6 3.6 M-5.4 5.4 L-3.6 3.6 M5.4 -5.4 L3.6 -3.6"/></g></g></svg><svg style="left:335.5px;top:1002.0px" width="15" height="14" viewBox="0 0 15 14"><rect x="0" y="1" width="15" height="12" fill="#4aa3e0"/><rect x="1.4" y="2.6" width="5" height="4" fill="#dff0ff"/><rect x="8" y="2.6" width="5.4" height="2" fill="#dff0ff"/><rect x="8" y="6" width="5.4" height="2" fill="#dff0ff"/><rect x="1.4" y="8.4" width="12" height="3" fill="#9ad26a"/></svg><svg style="left:370.5px;top:1000.5px" width="17" height="17" viewBox="0 0 17 17"><circle cx="8.5" cy="8.5" r="8.2" fill="#0d0d0d" stroke="#2e6e6a" stroke-width="0.8"/><path d="M8.5 2.6 Q13 4 11.6 9.4 L10 14 H7 L5.4 9.4 Q4 4 8.5 2.6Z" fill="#fff"/><circle cx="8.5" cy="7.4" r="1.6" fill="#0d0d0d"/><rect x="8" y="8" width="1" height="5" fill="#0d0d0d"/></svg><svg style="left:407.0px;top:1000.5px" width="17" height="17" viewBox="0 0 17 17"><rect x="4" y="0.5" width="12.5" height="16" rx="1" fill="#1d7a46"/><rect x="0" y="3.6" width="10" height="10" fill="#0f5c34"/><path d="M2.8 6 L7.2 11.4 M7.2 6 L2.8 11.4" stroke="#fff" stroke-width="1.5"/><path d="M11.4 4 H15 M11.4 7 H15 M11.4 10 H15 M11.4 13 H15" stroke="#9fd8b4" stroke-width="1.1"/></svg><svg style="left:445.5px;top:1000.5px" width="12" height="17" viewBox="0 0 12 17"><rect x="0" y="7" width="4.6" height="10" fill="#c9971a"/><rect x="4.6" y="3.4" width="4.6" height="13.6" fill="#e4b62a"/><rect x="7" y="0" width="5" height="17" fill="#f6d248"/></svg><svg style="left:480.5px;top:1001.0px" width="15" height="16" viewBox="0 0 15 16"><path d="M3.4 2 L12.6 0.6 L14 13 L5 15.4Z" fill="#b9d4e6"/><path d="M3.4 2 L5 15.4 L2 13.6 L0.6 4Z" fill="#7f9cb0"/><path d="M4.6 3.4 L11.8 2.2 L12.8 12 L5.8 13.8Z" fill="#e4f0f8"/></svg><div class="a" style="left:507px;top:994px;width:36px;height:30px;background:rgba(255,255,255,.17)"></div><svg style="left:516.5px;top:1000.5px" width="17" height="17" viewBox="0 0 17 17"><circle cx="8.5" cy="8.5" r="8.2" fill="#8fc866"/><path d="M3.6 12.6 C2 8 6 4 13.6 4.4 C13.8 10 10 14 5 13 C6.4 10.8 8.4 8.6 11 7 C7.8 8 5.4 10 3.6 12.6Z" fill="#fff"/></svg><svg style="left:553.5px;top:1000.5px" width="16" height="17" viewBox="0 0 16 17"><path d="M2 9 L9 1 L15.6 6.4 L8 15Z" fill="#d8382e"/><path d="M2 9 L8 15 L1 16.4Z" fill="#f2d6c6"/><path d="M10 10.6 L15 13 L12 13.6 L13 16.6 L11.2 13.8 L9 15.6Z" fill="#f2e24a"/></svg><div class="a" style="left:581px;top:994px;width:35px;height:30px;background:#b6612b"></div><svg style="left:589.5px;top:1000.5px" width="17" height="17" viewBox="0 0 17 17"><rect x="0" y="0" width="17" height="17" rx="4.6" fill="#4a8cff"/><rect x="3" y="5.2" width="7.6" height="6.6" rx="1.6" fill="#fff"/><path d="M11.3 7.6 L14 5.6 V11.4 L11.3 9.4Z" fill="#fff"/></svg><svg style="left:626.0px;top:1000.5px" width="17" height="17" viewBox="0 0 17 17"><circle cx="8.5" cy="8.5" r="8.3" fill="#e8e8e8"/><path d="M8.5 8.5 L1.3 4.4 A8.3 8.3 0 0 1 15.7 4.4Z" fill="#e2412f"/><path d="M8.5 8.5 L15.7 4.4 A8.3 8.3 0 0 1 8.5 16.8Z" fill="#f7c52a"/><path d="M8.5 8.5 L8.5 16.8 A8.3 8.3 0 0 1 1.3 4.4Z" fill="#2fa04a"/><circle cx="8.5" cy="8.5" r="3.8" fill="#fff"/><circle cx="8.5" cy="8.5" r="3" fill="#3d7ee8"/></svg><div class="a" style="left:184px;top:1022px;width:28px;height:2px;background:#76b9ed"></div><div class="a" style="left:220px;top:1022px;width:28px;height:2px;background:#76b9ed"></div><div class="a" style="left:508px;top:1022px;width:35px;height:2px;background:#76b9ed"></div><div class="a" style="left:548px;top:1022px;width:28px;height:2px;background:#76b9ed"></div><div class="a" style="left:581px;top:1022px;width:35px;height:2px;background:#f07a1c"></div><div class="a" style="left:621px;top:1022px;width:28px;height:2px;background:#76b9ed"></div><svg style="left:1190px;top:1004px" width="14" height="9" viewBox="0 0 14 9"><path d="M1 8 L7 1.6 L13 8" fill="none" stroke="#fff" stroke-width="1.3"/></svg><svg style="left:1220px;top:1003px" width="18" height="12" viewBox="0 0 18 12"><rect x="2.6" y="2.6" width="13.6" height="8" fill="#fff" stroke="#fff" stroke-width="1"/><rect x="16.6" y="5" width="1.2" height="3.4" fill="#fff"/><path d="M0.6 0.6 V4 M0.6 2.4 H3.6" stroke="#fff" stroke-width="1.1"/></svg><svg style="left:1254px;top:1002px" width="15" height="14" viewBox="0 0 15 14"><g fill="none" stroke="#fff"><path d="M13 13 A1 1 0 0 0 12 12" stroke-width="2"/><path d="M8.6 13 A4.4 4.4 0 0 1 13 8.6" stroke-width="1.2"/><path d="M5 13 A8 8 0 0 1 13 5" stroke-width="1.2" opacity=".8"/><path d="M1.4 13 A11.6 11.6 0 0 1 13 1.4" stroke-width="1.2" opacity=".6"/></g></svg><svg style="left:1284px;top:1002px" width="17" height="14" viewBox="0 0 17 14"><path d="M0.6 4.6 H3.4 L7 1.2 V12.8 L3.4 9.4 H0.6Z" fill="none" stroke="#fff" stroke-width="1.1"/><path d="M9.4 4.6 Q10.8 7 9.4 9.4 M11.6 3 Q13.8 7 11.6 11 M13.8 1.4 Q16.8 7 13.8 12.6" fill="none" stroke="#fff" stroke-width="1.1"/></svg><svg style="left:1316px;top:1001px" width="16" height="17" viewBox="0 0 16 17"><path d="M9 1.4 Q12 0 13.4 2.6 Q14.4 5 11.6 6.4 L5 9.4 Q2.6 10.8 3.4 13 Q4.2 14.8 6 14.4 M10.6 2 L5.4 15.6 M1 12 Q0.2 9 3 8" fill="none" stroke="#fff" stroke-width="1.3"/></svg><div class="t" style="left:1343px;top:999px;font-size:19px;color:#fff">A</div><div class="t kr" style="left:1371.5px;top:1000px;font-size:16px;color:#fff;transform:scaleY(0.9);transform-origin:0 0">ㅎ</div><div class="a" style="left:1378.6px;top:1014.6px;width:2px;height:2px;border-radius:1px;background:#fff"></div><div class="t kr" style="left:1407px;top:1004px;font-size:11.8px;color:#fff">오후 7:49</div><svg style="left:1478px;top:1001px" width="16" height="16" viewBox="0 0 16 16"><path d="M0.6 0.6 H15.4 V12 H6 L3 15 V12 H0.6Z" fill="#fff"/><path d="M3.4 3.6 H12.6 M3.4 6.2 H12.6 M3.4 8.8 H9" stroke="#222" stroke-width="0.9"/></svg><div class="a" style="left:1513px;top:994px;width:1px;height:30px;background:#6a676c"></div>
<div class="a" style="left:8px;top:160px;width:149px;height:32.5px;background:rgba(0,0,0,.40);border-radius:2.5px;border:1px solid rgba(120,120,120,.28)"></div>
<svg style="left:22px;top:165.4px" width="22" height="16" viewBox="0 0 22 16"><path d="M5 15 H17 Q21 15 21 11.4 Q21 8.6 18 8 Q17.6 1.6 12.4 1.6 Q8.4 1.6 7 5.4 Q0.8 5.6 0.8 10.6 Q0.8 15 5 15Z" fill="#d9d9d9" opacity=".82"/><circle cx="10.8" cy="9.6" r="3" fill="#ff2f3a"/></svg>
<div class="t kr" style="left:63px;top:167px;font-size:15.6px;color:#fff;opacity:.88">기록 중...</div>

</body></html>
